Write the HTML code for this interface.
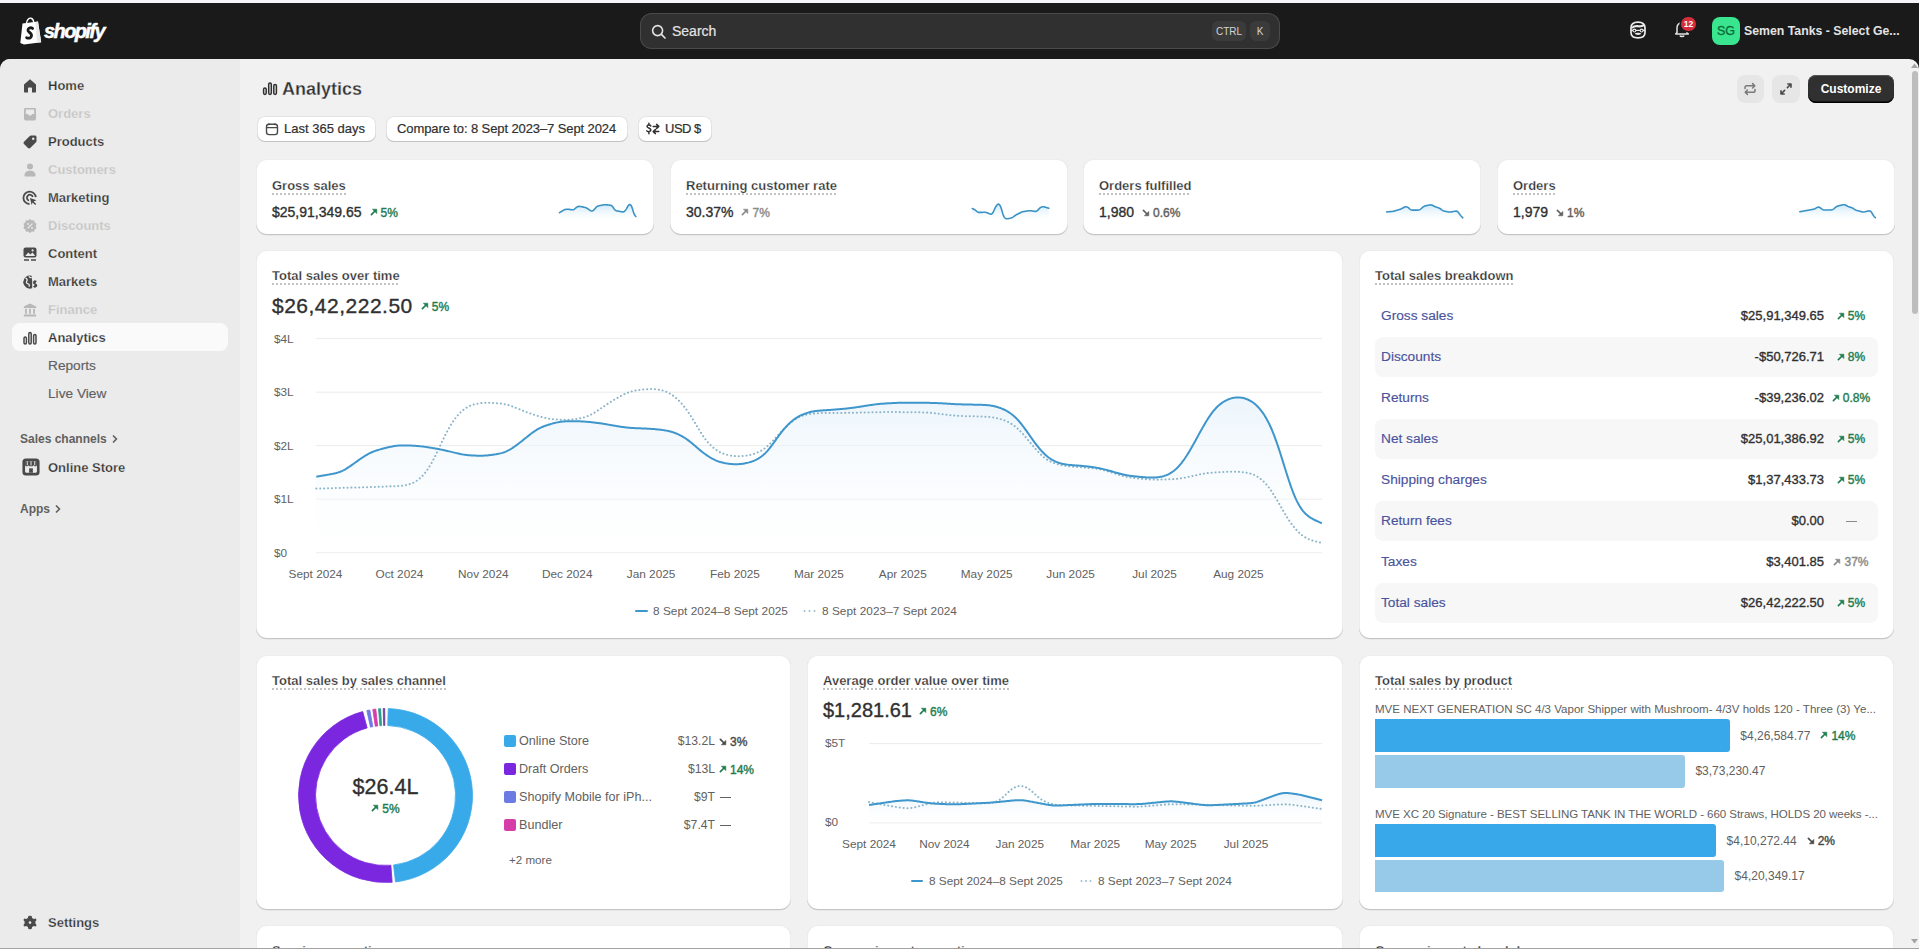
<!DOCTYPE html>
<html><head><meta charset="utf-8">
<style>
*{box-sizing:border-box;margin:0;padding:0}
html,body{width:1919px;height:949px;overflow:hidden;background:#1a1a1a;font-family:"Liberation Sans",sans-serif;color:#303030}
.abs{position:absolute}
#topstrip{left:0;top:0;width:1919px;height:3px;background:#f6f6f8}
#topbar{left:0;top:3px;width:1919px;height:56px;background:#1a1a1a}
#frame{left:0;top:59px;width:1919px;height:889px;background:#f1f1f1;border-radius:10px 10px 0 0;overflow:hidden}
#sidebar{left:0;top:0;width:240px;height:889px;background:#ebebeb}
#bottomline{left:0;top:948px;width:1919px;height:1px;background:#a3a3a3}
.nav{position:absolute;left:12px;width:216px;height:28px;border-radius:8px;display:flex;align-items:center}
.nav .ic{position:absolute;left:8px;top:5px;width:20px;height:20px}
.nav .tx{position:absolute;left:36px;top:1px;line-height:28px;font-size:13px;font-weight:700;color:#303030;white-space:nowrap;-webkit-text-stroke:0.25px #ebebeb}
.nav.dis .tx{color:#c4c4c4}
.nav.sub .tx{font-weight:400;color:#616161;font-size:13.7px;-webkit-text-stroke:0.15px #616161}
.nav.act{background:#fafafa}
.card{position:absolute;background:#fff;border-radius:11px;box-shadow:0 0.5px 0 rgba(0,0,0,.08),inset 0 -1px 0 rgba(0,0,0,.17),inset 0 0 0 1px rgba(0,0,0,.07)}
.t13{font-size:13px;font-weight:700;color:#303030;line-height:16px;white-space:nowrap;-webkit-text-stroke:0.25px #fff}
.dot{background-image:linear-gradient(to right,#c2c2c2 50%,transparent 50%);background-size:4px 2px;background-repeat:repeat-x;background-position:0 100%;padding-bottom:2px}
.green{color:#1f7d4f}
.med{font-weight:400;-webkit-text-stroke:0.35px currentColor}
.gray{color:#616161}
.gray2{color:#8a8a8a}
.pct{font-size:12px;font-weight:400;-webkit-text-stroke:0.4px currentColor;white-space:nowrap}
.btn{position:absolute;top:115.5px;height:26.5px;background:#fff;border-radius:8px;box-shadow:inset 0 -1px 0 #c4c4c4,inset 0 0 0 1px #e3e3e3;font-size:13px;line-height:26px;color:#303030;white-space:nowrap;-webkit-text-stroke:0.2px #303030}
.axis{font-size:11.8px;color:#616161;white-space:nowrap;line-height:14px}
</style></head><body>
<div id="topstrip" class="abs"></div>
<div id="topbar" class="abs">
  <!-- logo -->
  <svg class="abs" style="left:19px;top:14px" width="24" height="28" viewBox="0 0 24 28">
    <path d="M3.5 6.5 L19 4.6 L22.2 25.2 L5 27.6 L1.3 26 Z" fill="#fff"/>
    <path d="M16.5 4.9 L19 4.6 L22.2 25.2 L18 25.8 Z" fill="#e8e8e8"/>
    <path d="M7.5 6 C8 2.5 10 0.8 12 1.2 C13.6 1.5 14.5 3 14.7 5.2" fill="none" stroke="#fff" stroke-width="1.4"/>
    <path d="M13.6 11.4 C12.6 10.7 11.3 10.6 10.4 11 C8.7 11.7 8.5 13.8 9.9 14.9 C11.2 15.9 12.9 16.8 12.5 19.1 C12.1 21.2 9.7 21.7 7.6 20.7" fill="none" stroke="#1a1a1a" stroke-width="2.8" stroke-linecap="round"/>
  </svg>
  <div class="abs" style="left:44px;top:14px;font-size:20px;font-weight:700;font-style:italic;color:#fff;letter-spacing:-1.6px;line-height:28px;-webkit-text-stroke:0.5px #fff">shopify</div>
  <!-- search -->
  <div class="abs" style="left:640px;top:10px;width:640px;height:36px;background:#303030;border-radius:12px;box-shadow:inset 0 0 0 1px #4a4a4a"></div>
  <svg class="abs" style="left:651px;top:21px" width="16" height="16" viewBox="0 0 16 16"><circle cx="6.6" cy="6.6" r="5" fill="none" stroke="#e3e3e3" stroke-width="1.6"/><path d="M10.4 10.4 L14 14" stroke="#e3e3e3" stroke-width="1.7" stroke-linecap="round"/></svg>
  <div class="abs" style="left:672px;top:20px;font-size:14px;line-height:16px;color:#e3e3e3;-webkit-text-stroke:0.2px #e3e3e3">Search</div>
  <div class="abs" style="left:1212px;top:18px;width:34px;height:20px;border-radius:6px;background:#3b3b3b;font-size:10px;line-height:22px;color:#d4d4d4;text-align:center">CTRL</div>
  <div class="abs" style="left:1250px;top:18px;width:20px;height:20px;border-radius:6px;background:#3b3b3b;font-size:10px;line-height:22px;color:#d4d4d4;text-align:center">K</div>
  <!-- right icons -->
  <svg class="abs" style="left:1628px;top:17px" width="20" height="20" viewBox="0 0 20 20"><path d="M3 8 C3 3.6 5.8 2.2 10 2.2 C14.2 2.2 17 3.6 17 8 V12.4 C17 16 14.4 17.8 10 17.8 C5.6 17.8 3 16 3 12.4 Z" fill="none" stroke="#ececec" stroke-width="1.7"/><path d="M3.6 7.2 C5 5.6 7.5 4.6 10.6 5.2 C12.6 5.6 14.6 4.8 16 3.8 L16.2 6 C14.5 7.4 12 7.6 9.6 7.3 C7.4 7 5.4 7.6 3.8 8.8 Z" fill="#ececec"/><path d="M3 10.4 H17" stroke="#ececec" stroke-width="1.2"/><circle cx="6.4" cy="10.6" r="2" fill="#ececec"/><circle cx="13.6" cy="10.6" r="2" fill="#ececec"/><circle cx="6.4" cy="10.6" r="0.9" fill="#1a1a1a"/><circle cx="13.6" cy="10.6" r="0.9" fill="#1a1a1a"/><path d="M6.6 13.6 C8 12.6 12 12.6 13.4 13.6 C12.6 15.4 7.4 15.4 6.6 13.6 Z" fill="#ececec"/></svg>
  <svg class="abs" style="left:1672px;top:16px" width="20" height="20" viewBox="0 0 20 20"><path d="M5 13.5 L5 9 C5 5.8 7.2 4 10 4 C12.8 4 15 5.8 15 9 L15 13.5 L16.3 15 L3.7 15 Z" fill="none" stroke="#e3e3e3" stroke-width="1.5" stroke-linejoin="round"/><path d="M8 16.5 C8.3 17.8 11.7 17.8 12 16.5" fill="none" stroke="#e3e3e3" stroke-width="1.5"/></svg>
  <div class="abs" style="left:1681px;top:14px;width:15px;height:14px;border-radius:7px;background:#d62d3d;box-shadow:0 0 0 1.5px #1a1a1a;color:#fff;font-size:8.5px;font-weight:700;line-height:14px;text-align:center">12</div>
  <div class="abs" style="left:1712px;top:14px;width:28px;height:28px;border-radius:8px;background:#3ae590;color:#0b6b35;-webkit-text-stroke:0.3px #0b6b35;font-size:12.5px;line-height:28px;text-align:center">SG</div>
  <div class="abs" style="left:1744px;top:20px;font-size:12.3px;font-weight:700;line-height:16px;color:#e3e3e3;white-space:nowrap">Semen Tanks - Select Ge...</div>
</div>

<div id="frame" class="abs"><div id="sidebar" class="abs"></div></div>
<div class="nav " style="top:71px"><svg class="ic" viewBox="0 0 20 20"><path d="M10 3.2 L16 8.6 V15.6 C16 16.2 15.6 16.6 15 16.6 H12 V12.6 C12 12 11.6 11.6 11 11.6 H9 C8.4 11.6 8 12 8 12.6 V16.6 H5 C4.4 16.6 4 16.2 4 15.6 V8.6 Z" fill="#4a4a4a"/></svg><div class="tx">Home</div></div>
<div class="nav dis" style="top:99px"><svg class="ic" viewBox="0 0 20 20"><path d="M5.5 4 H14.5 C15.6 4 16 4.6 16 5.6 V14.6 C16 15.6 15.4 16.4 14.4 16.4 H5.6 C4.6 16.4 4 15.6 4 14.6 V5.6 C4 4.6 4.4 4 5.5 4 Z M5.8 5.6 V10 H7.8 L9 11.4 H11 L12.2 10 H14.2 V5.6 Z" fill="#b8b8b8" fill-rule="evenodd"/></svg><div class="tx">Orders</div></div>
<div class="nav " style="top:127px"><svg class="ic" viewBox="0 0 20 20"><path d="M11 3.5 H15 C15.8 3.5 16.5 4.2 16.5 5 V9 C16.5 9.5 16.3 9.9 16 10.2 L10.2 16 C9.6 16.6 8.6 16.6 8 16 L4 12 C3.4 11.4 3.4 10.4 4 9.8 L9.8 4 C10.1 3.7 10.5 3.5 11 3.5 Z" fill="#4a4a4a"/><circle cx="13.2" cy="6.8" r="1.2" fill="#ebebeb"/></svg><div class="tx">Products</div></div>
<div class="nav dis" style="top:155px"><svg class="ic" viewBox="0 0 20 20"><circle cx="10" cy="6.5" r="3" fill="#b8b8b8"/><path d="M4.5 15.5 C4.5 12.2 7 10.8 10 10.8 C13 10.8 15.5 12.2 15.5 15.5 C15.5 16.1 15.1 16.5 14.5 16.5 H5.5 C4.9 16.5 4.5 16.1 4.5 15.5 Z" fill="#b8b8b8"/></svg><div class="tx">Customers</div></div>
<div class="nav " style="top:183px"><svg class="ic" viewBox="0 0 20 20"><path d="M9.5 16 A6.2 6.2 0 1 1 15.8 9.2" fill="none" stroke="#4a4a4a" stroke-width="1.8"/><path d="M9 12.6 A3 3 0 1 1 12.8 9" fill="none" stroke="#4a4a4a" stroke-width="1.8"/><path d="M10 10 L16.5 12.2 L13.6 13.4 L16.2 16 L15.2 17 L12.6 14.4 L11.6 17 Z" fill="#4a4a4a"/></svg><div class="tx">Marketing</div></div>
<div class="nav dis" style="top:211px"><svg class="ic" viewBox="0 0 20 20"><path d="M10 3 L11.8 4.5 L14.1 4.3 L14.6 6.6 L16.6 7.8 L15.7 10 L16.6 12.2 L14.6 13.4 L14.1 15.7 L11.8 15.5 L10 17 L8.2 15.5 L5.9 15.7 L5.4 13.4 L3.4 12.2 L4.3 10 L3.4 7.8 L5.4 6.6 L5.9 4.3 L8.2 4.5 Z" fill="#b8b8b8"/><path d="M7.6 12.4 L12.4 7.6" stroke="#ebebeb" stroke-width="1.3"/><circle cx="8" cy="8" r="0.9" fill="#ebebeb"/><circle cx="12" cy="12" r="0.9" fill="#ebebeb"/></svg><div class="tx">Discounts</div></div>
<div class="nav " style="top:239px"><svg class="ic" viewBox="0 0 20 20"><rect x="3.5" y="3.5" width="13" height="10" rx="2" fill="#4a4a4a"/><path d="M5.2 12 L8.3 8.4 L10.4 10.4 L12.4 8.6 L14.8 11.2 V12 Z" fill="#ebebeb"/><circle cx="12.6" cy="6.4" r="1.1" fill="#ebebeb"/><path d="M4 16 H9 M11 16 H16" stroke="#4a4a4a" stroke-width="1.6"/></svg><div class="tx">Content</div></div>
<div class="nav " style="top:267px"><svg class="ic" viewBox="0 0 20 20"><path d="M11.6 3.7 A6.6 6.6 0 1 0 12.2 16.2 L12.2 9 Z" fill="#4a4a4a"/><path d="M5.5 6.2 C7 6.6 7.6 8 6.8 9 C6 10 6.6 11.8 8 11.8 C9 11.8 9.5 13 9.2 14.6" fill="none" stroke="#ebebeb" stroke-width="1.3"/><path d="M9 4.2 C9.5 5.5 10.8 5.8 11.6 5.4" fill="none" stroke="#ebebeb" stroke-width="1.2"/><path d="M16.4 9.6 C15.6 8.9 13.6 9 13.6 10.4 C13.6 12 16.6 11.6 16.6 13.4 C16.6 14.8 14.4 15 13.4 14.2 M15 8.2 V15.8" fill="none" stroke="#4a4a4a" stroke-width="1.4"/></svg><div class="tx">Markets</div></div>
<div class="nav dis" style="top:295px"><svg class="ic" viewBox="0 0 20 20"><path d="M10 3.5 L16.2 6.6 V8 H3.8 V6.6 Z" fill="#b8b8b8"/><rect x="5" y="8.8" width="1.8" height="5" fill="#b8b8b8"/><rect x="9.1" y="8.8" width="1.8" height="5" fill="#b8b8b8"/><rect x="13.2" y="8.8" width="1.8" height="5" fill="#b8b8b8"/><rect x="3.8" y="14.4" width="12.4" height="2" rx="0.6" fill="#b8b8b8"/></svg><div class="tx">Finance</div></div>
<div class="nav act" style="top:323px"><svg class="ic" viewBox="0 0 20 20"><rect x="4" y="9" width="2.4" height="7" rx="1.2" fill="none" stroke="#4a4a4a" stroke-width="1.5"/><rect x="8.8" y="4.5" width="2.4" height="11.5" rx="1.2" fill="none" stroke="#4a4a4a" stroke-width="1.5"/><rect x="13.6" y="6.5" width="2.4" height="9.5" rx="1.2" fill="none" stroke="#4a4a4a" stroke-width="1.5"/></svg><div class="tx">Analytics</div></div>
<div class="nav sub" style="top:351px"><svg class="ic" viewBox="0 0 20 20"></svg><div class="tx">Reports</div></div>
<div class="nav sub" style="top:379px"><svg class="ic" viewBox="0 0 20 20"></svg><div class="tx">Live View</div></div>
<div class="abs" style="left:20px;top:431px;font-size:12px;font-weight:700;color:#616161;line-height:16px;white-space:nowrap">Sales channels</div><svg class="abs" style="left:110px;top:433px" width="10" height="12" viewBox="0 0 10 12"><path d="M3.5 3 L6.5 6 L3.5 9" fill="none" stroke="#616161" stroke-width="1.7" stroke-linecap="round" stroke-linejoin="round"/></svg>
<div class="nav " style="top:453px"><svg class="ic" viewBox="0 0 20 20" style="left:8px;top:3px;width:22px;height:22px"><rect x="2.2" y="2.2" width="15.6" height="15.6" rx="3.2" fill="#4a4a4a"/><rect x="4.6" y="4.8" width="10.8" height="10.4" rx="1" fill="#ebebeb"/><path d="M4.6 4.8 H15.4 V8 C15.4 8.9 14.6 9.4 13.9 9.4 C13.1 9.4 12.5 8.9 12.4 8.2 C12.2 8.9 11.6 9.4 10.9 9.4 H9.1 C8.4 9.4 7.8 8.9 7.6 8.2 C7.5 8.9 6.9 9.4 6.1 9.4 C5.4 9.4 4.6 8.9 4.6 8 Z" fill="#4a4a4a"/><path d="M6.6 4.8 V8.4 M10 4.8 V8.6 M13.4 4.8 V8.4" stroke="#ebebeb" stroke-width="0.9"/><rect x="8.3" y="11.2" width="3.4" height="4" fill="#4a4a4a"/></svg><div class="tx">Online Store</div></div>
<div class="abs" style="left:20px;top:501px;font-size:12px;font-weight:700;color:#616161;line-height:16px;white-space:nowrap">Apps</div><svg class="abs" style="left:53px;top:503px" width="10" height="12" viewBox="0 0 10 12"><path d="M3.5 3 L6.5 6 L3.5 9" fill="none" stroke="#616161" stroke-width="1.7" stroke-linecap="round" stroke-linejoin="round"/></svg>
<div class="nav " style="top:908px"><svg class="ic" viewBox="0 0 20 20"><path d="M10 2.8 L11.6 3.1 L12.1 5 L13.8 6 L15.7 5.5 L16.6 6.9 L15.4 8.4 V10.6 L16.6 12.1 L15.7 13.5 L13.8 13 L12.1 14 L11.6 15.9 L10 16.2 L8.4 15.9 L7.9 14 L6.2 13 L4.3 13.5 L3.4 12.1 L4.6 10.6 V8.4 L3.4 6.9 L4.3 5.5 L6.2 6 L7.9 5 L8.4 3.1 Z" fill="#4a4a4a"/><circle cx="10" cy="9.6" r="1.3" fill="#ebebeb"/></svg><div class="tx">Settings</div></div>

<svg class="abs" style="left:261px;top:79px" width="18" height="18" viewBox="0 0 18 18"><rect x="2.6" y="9" width="2.6" height="6.4" rx="1.3" fill="none" stroke="#303030" stroke-width="1.5"/><rect x="7.7" y="4" width="2.6" height="11.4" rx="1.3" fill="none" stroke="#303030" stroke-width="1.5"/><rect x="12.8" y="5.5" width="2.6" height="9.9" rx="1.3" fill="none" stroke="#303030" stroke-width="1.5"/></svg>
<div class="abs" style="left:282px;top:77px;font-size:18px;font-weight:700;line-height:24px;color:#303030;white-space:nowrap;-webkit-text-stroke:0.3px #f1f1f1">Analytics</div>
<div class="btn" style="left:257px;width:119px"><svg class="abs" style="left:7px;top:5px" width="16" height="16" viewBox="0 0 16 16"><rect x="2.5" y="3.2" width="11" height="10.4" rx="2.6" fill="none" stroke="#4a4a4a" stroke-width="1.4"/><path d="M2.8 6.6 H13.2 M5 2.2 V3.6 M11 2.2 V3.6" stroke="#4a4a4a" stroke-width="1.4"/></svg><span class="abs" style="left:27px;top:0">Last 365 days</span></div>
<div class="btn" style="left:386px;width:242px"><span class="abs" style="left:11px;top:0;letter-spacing:-0.1px">Compare to: 8 Sept 2023–7 Sept 2024</span></div>
<div class="btn" style="left:638px;width:74px"><svg class="abs" style="left:7px;top:5px" width="16" height="16" viewBox="0 0 16 16"><path d="M5.8 4.9 C5.4 3.9 2.2 3.6 2 5.4 C1.9 7.2 5.9 6.8 5.9 9 C5.9 11 2.6 11 1.8 9.9 M3.9 2.2 V4 M3.9 11 V12.8" fill="none" stroke="#303030" stroke-width="1.5" stroke-linecap="round"/><path d="M8.2 5.4 H13.6 M11.6 3.4 L13.8 5.4 L11.6 7.4 M13.8 10.6 H8.4 M10.4 8.6 L8.2 10.6 L10.4 12.6" fill="none" stroke="#303030" stroke-width="1.5" stroke-linecap="round" stroke-linejoin="round"/></svg><span class="abs" style="left:27px;top:0;letter-spacing:-0.5px">USD $</span></div>
<div class="abs" style="left:1737px;top:75px;width:27px;height:28px;border-radius:8px;background:#e6e6e6"><svg class="abs" style="left:4px;top:5px" width="18" height="18" viewBox="0 0 18 18"><path d="M4 8.6 V7.6 C4 6.5 4.8 5.8 5.8 5.8 H13.6 M11.6 3.6 L13.8 5.8 L11.6 8" fill="none" stroke="#7a7a7a" stroke-width="1.5" stroke-linecap="round" stroke-linejoin="round"/><path d="M14 9.4 V10.4 C14 11.5 13.2 12.2 12.2 12.2 H4.4 M6.4 14.4 L4.2 12.2 L6.4 10" fill="none" stroke="#7a7a7a" stroke-width="1.5" stroke-linecap="round" stroke-linejoin="round"/></svg></div>
<div class="abs" style="left:1772px;top:75px;width:28px;height:28px;border-radius:8px;background:#e6e6e6"><svg class="abs" style="left:5px;top:5px" width="18" height="18" viewBox="0 0 18 18"><path d="M10.4 7.6 L14 4 M14 4 H10.8 M14 4 V7.2 M7.6 10.4 L4 14 M4 14 H7.2 M4 14 V10.8" fill="none" stroke="#4a4a4a" stroke-width="1.6" stroke-linecap="round" stroke-linejoin="round"/></svg></div>
<div class="abs" style="left:1808px;top:75px;width:86px;height:28px;border-radius:8px;background:#303030;box-shadow:inset 0 -1.5px 0 #000,inset 0 1px 0 #555;color:#fff;font-size:12px;font-weight:700;line-height:28px;text-align:center">Customize</div>

<div class="card" style="left:256px;top:159px;width:398px;height:76px"></div>
<div class="abs t13" style="left:272px;top:178px"><span class="dot">Gross sales</span></div>
<div class="abs" style="left:272px;top:203px;line-height:17px;white-space:nowrap"><span class="med" style="font-size:14px;color:#303030">$25,91,349.65</span><span class="pct green" style="margin-left:8px"><svg width="8" height="8" viewBox="0 0 8 8" style="display:inline-block;vertical-align:middle;margin-right:3px;position:relative;top:-1.5px"><path d="M1.4 6.6 L5 3" stroke="currentColor" stroke-width="1.7" stroke-linecap="round"/><path d="M2.4 1.2 H6.8 V5.6 Z" fill="currentColor" stroke="currentColor" stroke-width="0.6" stroke-linejoin="round"/></svg>5%</span></div>
<svg class="abs" style="left:0;top:0" width="1919" height="260" viewBox="0 0 1919 260"><defs><linearGradient id="sg0" x1="0" y1="0" x2="0" y2="1"><stop offset="0" stop-color="#bfe2f7" stop-opacity=".8"/><stop offset="1" stop-color="#ffffff" stop-opacity="0"/></linearGradient></defs><path d="M559.40 212.70 L559.90 212.40 L560.40 212.10 L560.90 211.81 L561.40 211.51 L561.90 211.21 L562.40 210.91 L562.90 210.61 L563.40 210.32 L563.90 210.05 L564.40 209.80 L564.90 209.60 L565.40 209.46 L565.90 209.37 L566.40 209.33 L566.90 209.31 L567.40 209.30 L567.90 209.31 L568.40 209.32 L568.90 209.34 L569.40 209.39 L569.90 209.45 L570.40 209.53 L570.90 209.62 L571.40 209.70 L571.90 209.78 L572.40 209.82 L572.90 209.79 L573.40 209.66 L573.90 209.42 L574.40 209.09 L574.90 208.69 L575.40 208.27 L575.90 207.84 L576.40 207.44 L576.90 207.09 L577.40 206.81 L577.90 206.61 L578.40 206.47 L578.90 206.40 L579.40 206.38 L579.90 206.42 L580.40 206.49 L580.90 206.58 L581.40 206.68 L581.90 206.79 L582.40 206.90 L582.90 207.01 L583.40 207.12 L583.90 207.23 L584.40 207.34 L584.90 207.46 L585.40 207.59 L585.90 207.75 L586.40 207.95 L586.90 208.20 L587.40 208.50 L587.90 208.83 L588.40 209.18 L588.90 209.53 L589.40 209.89 L589.90 210.22 L590.40 210.52 L590.90 210.75 L591.40 210.90 L591.90 210.94 L592.40 210.87 L592.90 210.68 L593.40 210.36 L593.90 209.92 L594.40 209.39 L594.90 208.79 L595.40 208.18 L595.90 207.59 L596.40 207.07 L596.90 206.63 L597.40 206.31 L597.90 206.08 L598.40 205.92 L598.90 205.80 L599.40 205.69 L599.90 205.58 L600.40 205.48 L600.90 205.38 L601.40 205.28 L601.90 205.17 L602.40 205.07 L602.90 204.97 L603.40 204.88 L603.90 204.80 L604.40 204.74 L604.90 204.72 L605.40 204.72 L605.90 204.75 L606.40 204.79 L606.90 204.84 L607.40 204.90 L607.90 204.95 L608.40 205.01 L608.90 205.06 L609.40 205.12 L609.90 205.18 L610.40 205.26 L610.90 205.38 L611.40 205.60 L611.90 205.94 L612.40 206.43 L612.90 207.06 L613.40 207.78 L613.90 208.52 L614.40 209.22 L614.90 209.81 L615.40 210.26 L615.90 210.57 L616.40 210.77 L616.90 210.90 L617.40 211.01 L617.90 211.10 L618.40 211.19 L618.90 211.28 L619.40 211.37 L619.90 211.46 L620.40 211.55 L620.90 211.64 L621.40 211.73 L621.90 211.81 L622.40 211.88 L622.90 211.91 L623.40 211.85 L623.90 211.68 L624.40 211.37 L624.90 210.91 L625.40 210.32 L625.90 209.62 L626.40 208.83 L626.90 207.98 L627.40 207.09 L627.90 206.22 L628.40 205.46 L628.90 204.88 L629.40 204.55 L629.90 204.49 L630.40 204.71 L630.90 205.20 L631.40 206.00 L631.90 207.15 L632.40 208.62 L632.90 210.29 L633.40 211.94 L633.90 213.39 L634.40 214.53 L634.90 215.37 L635.40 215.99 L635.90 216.51 L636.0 222 L559.4 222 Z" fill="url(#sg0)"/><path d="M559.40 212.70 L559.90 212.40 L560.40 212.10 L560.90 211.81 L561.40 211.51 L561.90 211.21 L562.40 210.91 L562.90 210.61 L563.40 210.32 L563.90 210.05 L564.40 209.80 L564.90 209.60 L565.40 209.46 L565.90 209.37 L566.40 209.33 L566.90 209.31 L567.40 209.30 L567.90 209.31 L568.40 209.32 L568.90 209.34 L569.40 209.39 L569.90 209.45 L570.40 209.53 L570.90 209.62 L571.40 209.70 L571.90 209.78 L572.40 209.82 L572.90 209.79 L573.40 209.66 L573.90 209.42 L574.40 209.09 L574.90 208.69 L575.40 208.27 L575.90 207.84 L576.40 207.44 L576.90 207.09 L577.40 206.81 L577.90 206.61 L578.40 206.47 L578.90 206.40 L579.40 206.38 L579.90 206.42 L580.40 206.49 L580.90 206.58 L581.40 206.68 L581.90 206.79 L582.40 206.90 L582.90 207.01 L583.40 207.12 L583.90 207.23 L584.40 207.34 L584.90 207.46 L585.40 207.59 L585.90 207.75 L586.40 207.95 L586.90 208.20 L587.40 208.50 L587.90 208.83 L588.40 209.18 L588.90 209.53 L589.40 209.89 L589.90 210.22 L590.40 210.52 L590.90 210.75 L591.40 210.90 L591.90 210.94 L592.40 210.87 L592.90 210.68 L593.40 210.36 L593.90 209.92 L594.40 209.39 L594.90 208.79 L595.40 208.18 L595.90 207.59 L596.40 207.07 L596.90 206.63 L597.40 206.31 L597.90 206.08 L598.40 205.92 L598.90 205.80 L599.40 205.69 L599.90 205.58 L600.40 205.48 L600.90 205.38 L601.40 205.28 L601.90 205.17 L602.40 205.07 L602.90 204.97 L603.40 204.88 L603.90 204.80 L604.40 204.74 L604.90 204.72 L605.40 204.72 L605.90 204.75 L606.40 204.79 L606.90 204.84 L607.40 204.90 L607.90 204.95 L608.40 205.01 L608.90 205.06 L609.40 205.12 L609.90 205.18 L610.40 205.26 L610.90 205.38 L611.40 205.60 L611.90 205.94 L612.40 206.43 L612.90 207.06 L613.40 207.78 L613.90 208.52 L614.40 209.22 L614.90 209.81 L615.40 210.26 L615.90 210.57 L616.40 210.77 L616.90 210.90 L617.40 211.01 L617.90 211.10 L618.40 211.19 L618.90 211.28 L619.40 211.37 L619.90 211.46 L620.40 211.55 L620.90 211.64 L621.40 211.73 L621.90 211.81 L622.40 211.88 L622.90 211.91 L623.40 211.85 L623.90 211.68 L624.40 211.37 L624.90 210.91 L625.40 210.32 L625.90 209.62 L626.40 208.83 L626.90 207.98 L627.40 207.09 L627.90 206.22 L628.40 205.46 L628.90 204.88 L629.40 204.55 L629.90 204.49 L630.40 204.71 L630.90 205.20 L631.40 206.00 L631.90 207.15 L632.40 208.62 L632.90 210.29 L633.40 211.94 L633.90 213.39 L634.40 214.53 L634.90 215.37 L635.40 215.99 L635.90 216.51" fill="none" stroke="#3b93c4" stroke-width="1.6" stroke-linejoin="round" stroke-linecap="round"/></svg>
<div class="card" style="left:670px;top:159px;width:398px;height:76px"></div>
<div class="abs t13" style="left:686px;top:178px"><span class="dot">Returning customer rate</span></div>
<div class="abs" style="left:686px;top:203px;line-height:17px;white-space:nowrap"><span class="med" style="font-size:14px;color:#303030">30.37%</span><span class="pct gray2" style="margin-left:8px"><svg width="8" height="8" viewBox="0 0 8 8" style="display:inline-block;vertical-align:middle;margin-right:3px;position:relative;top:-1.5px"><path d="M1.4 6.6 L5 3" stroke="currentColor" stroke-width="1.7" stroke-linecap="round"/><path d="M2.4 1.2 H6.8 V5.6 Z" fill="currentColor" stroke="currentColor" stroke-width="0.6" stroke-linejoin="round"/></svg>7%</span></div>
<svg class="abs" style="left:0;top:0" width="1919" height="260" viewBox="0 0 1919 260"><defs><linearGradient id="sg1" x1="0" y1="0" x2="0" y2="1"><stop offset="0" stop-color="#bfe2f7" stop-opacity=".8"/><stop offset="1" stop-color="#ffffff" stop-opacity="0"/></linearGradient></defs><path d="M972.30 208.50 L972.80 208.76 L973.30 209.02 L973.80 209.28 L974.30 209.56 L974.80 209.86 L975.30 210.19 L975.80 210.56 L976.30 210.95 L976.80 211.35 L977.30 211.72 L977.80 212.02 L978.30 212.23 L978.80 212.36 L979.30 212.41 L979.80 212.42 L980.30 212.41 L980.80 212.39 L981.30 212.37 L981.80 212.35 L982.30 212.33 L982.80 212.32 L983.30 212.30 L983.80 212.28 L984.30 212.27 L984.80 212.27 L985.30 212.31 L985.80 212.38 L986.30 212.49 L986.80 212.65 L987.30 212.83 L987.80 213.03 L988.30 213.23 L988.80 213.44 L989.30 213.64 L989.80 213.84 L990.30 214.02 L990.80 214.14 L991.30 214.15 L991.80 213.96 L992.30 213.51 L992.80 212.80 L993.30 211.89 L993.80 210.85 L994.30 209.75 L994.80 208.68 L995.30 207.66 L995.80 206.74 L996.30 205.93 L996.80 205.24 L997.30 204.68 L997.80 204.29 L998.30 204.13 L998.80 204.22 L999.30 204.58 L999.80 205.18 L1000.30 206.02 L1000.80 207.12 L1001.30 208.51 L1001.80 210.15 L1002.30 211.92 L1002.80 213.65 L1003.30 215.18 L1003.80 216.38 L1004.30 217.24 L1004.80 217.81 L1005.30 218.19 L1005.80 218.45 L1006.30 218.63 L1006.80 218.72 L1007.30 218.75 L1007.80 218.72 L1008.30 218.65 L1008.80 218.55 L1009.30 218.45 L1009.80 218.34 L1010.30 218.23 L1010.80 218.10 L1011.30 217.94 L1011.80 217.74 L1012.30 217.48 L1012.80 217.18 L1013.30 216.85 L1013.80 216.49 L1014.30 216.13 L1014.80 215.77 L1015.30 215.42 L1015.80 215.08 L1016.30 214.77 L1016.80 214.48 L1017.30 214.21 L1017.80 213.95 L1018.30 213.70 L1018.80 213.45 L1019.30 213.20 L1019.80 212.95 L1020.30 212.70 L1020.80 212.46 L1021.30 212.23 L1021.80 212.02 L1022.30 211.84 L1022.80 211.70 L1023.30 211.59 L1023.80 211.50 L1024.30 211.42 L1024.80 211.35 L1025.30 211.28 L1025.80 211.21 L1026.30 211.14 L1026.80 211.07 L1027.30 210.99 L1027.80 210.93 L1028.30 210.86 L1028.80 210.80 L1029.30 210.75 L1029.80 210.73 L1030.30 210.73 L1030.80 210.77 L1031.30 210.83 L1031.80 210.90 L1032.30 210.99 L1032.80 211.07 L1033.30 211.16 L1033.80 211.25 L1034.30 211.33 L1034.80 211.39 L1035.30 211.42 L1035.80 211.39 L1036.30 211.25 L1036.80 210.99 L1037.30 210.61 L1037.80 210.16 L1038.30 209.65 L1038.80 209.14 L1039.30 208.63 L1039.80 208.15 L1040.30 207.73 L1040.80 207.39 L1041.30 207.13 L1041.80 206.94 L1042.30 206.81 L1042.80 206.74 L1043.30 206.74 L1043.80 206.79 L1044.30 206.89 L1044.80 207.02 L1045.30 207.17 L1045.80 207.32 L1046.30 207.48 L1046.80 207.64 L1047.30 207.79 L1047.80 207.95 L1048.30 208.11 L1048.80 208.27 L1048.9 222 L972.3 222 Z" fill="url(#sg1)"/><path d="M972.30 208.50 L972.80 208.76 L973.30 209.02 L973.80 209.28 L974.30 209.56 L974.80 209.86 L975.30 210.19 L975.80 210.56 L976.30 210.95 L976.80 211.35 L977.30 211.72 L977.80 212.02 L978.30 212.23 L978.80 212.36 L979.30 212.41 L979.80 212.42 L980.30 212.41 L980.80 212.39 L981.30 212.37 L981.80 212.35 L982.30 212.33 L982.80 212.32 L983.30 212.30 L983.80 212.28 L984.30 212.27 L984.80 212.27 L985.30 212.31 L985.80 212.38 L986.30 212.49 L986.80 212.65 L987.30 212.83 L987.80 213.03 L988.30 213.23 L988.80 213.44 L989.30 213.64 L989.80 213.84 L990.30 214.02 L990.80 214.14 L991.30 214.15 L991.80 213.96 L992.30 213.51 L992.80 212.80 L993.30 211.89 L993.80 210.85 L994.30 209.75 L994.80 208.68 L995.30 207.66 L995.80 206.74 L996.30 205.93 L996.80 205.24 L997.30 204.68 L997.80 204.29 L998.30 204.13 L998.80 204.22 L999.30 204.58 L999.80 205.18 L1000.30 206.02 L1000.80 207.12 L1001.30 208.51 L1001.80 210.15 L1002.30 211.92 L1002.80 213.65 L1003.30 215.18 L1003.80 216.38 L1004.30 217.24 L1004.80 217.81 L1005.30 218.19 L1005.80 218.45 L1006.30 218.63 L1006.80 218.72 L1007.30 218.75 L1007.80 218.72 L1008.30 218.65 L1008.80 218.55 L1009.30 218.45 L1009.80 218.34 L1010.30 218.23 L1010.80 218.10 L1011.30 217.94 L1011.80 217.74 L1012.30 217.48 L1012.80 217.18 L1013.30 216.85 L1013.80 216.49 L1014.30 216.13 L1014.80 215.77 L1015.30 215.42 L1015.80 215.08 L1016.30 214.77 L1016.80 214.48 L1017.30 214.21 L1017.80 213.95 L1018.30 213.70 L1018.80 213.45 L1019.30 213.20 L1019.80 212.95 L1020.30 212.70 L1020.80 212.46 L1021.30 212.23 L1021.80 212.02 L1022.30 211.84 L1022.80 211.70 L1023.30 211.59 L1023.80 211.50 L1024.30 211.42 L1024.80 211.35 L1025.30 211.28 L1025.80 211.21 L1026.30 211.14 L1026.80 211.07 L1027.30 210.99 L1027.80 210.93 L1028.30 210.86 L1028.80 210.80 L1029.30 210.75 L1029.80 210.73 L1030.30 210.73 L1030.80 210.77 L1031.30 210.83 L1031.80 210.90 L1032.30 210.99 L1032.80 211.07 L1033.30 211.16 L1033.80 211.25 L1034.30 211.33 L1034.80 211.39 L1035.30 211.42 L1035.80 211.39 L1036.30 211.25 L1036.80 210.99 L1037.30 210.61 L1037.80 210.16 L1038.30 209.65 L1038.80 209.14 L1039.30 208.63 L1039.80 208.15 L1040.30 207.73 L1040.80 207.39 L1041.30 207.13 L1041.80 206.94 L1042.30 206.81 L1042.80 206.74 L1043.30 206.74 L1043.80 206.79 L1044.30 206.89 L1044.80 207.02 L1045.30 207.17 L1045.80 207.32 L1046.30 207.48 L1046.80 207.64 L1047.30 207.79 L1047.80 207.95 L1048.30 208.11 L1048.80 208.27" fill="none" stroke="#3b93c4" stroke-width="1.6" stroke-linejoin="round" stroke-linecap="round"/></svg>
<div class="card" style="left:1083px;top:159px;width:398px;height:76px"></div>
<div class="abs t13" style="left:1099px;top:178px"><span class="dot">Orders fulfilled</span></div>
<div class="abs" style="left:1099px;top:203px;line-height:17px;white-space:nowrap"><span class="med" style="font-size:14px;color:#303030">1,980</span><span class="pct gray" style="margin-left:8px"><svg width="8" height="8" viewBox="0 0 8 8" style="display:inline-block;vertical-align:middle;margin-right:3px;position:relative;top:-1px"><path d="M1.4 1.4 L5 5" stroke="currentColor" stroke-width="1.7" stroke-linecap="round"/><path d="M2.4 6.8 H6.8 V2.4 Z" fill="currentColor" stroke="currentColor" stroke-width="0.6" stroke-linejoin="round"/></svg>0.6%</span></div>
<svg class="abs" style="left:0;top:0" width="1919" height="260" viewBox="0 0 1919 260"><defs><linearGradient id="sg2" x1="0" y1="0" x2="0" y2="1"><stop offset="0" stop-color="#bfe2f7" stop-opacity=".8"/><stop offset="1" stop-color="#ffffff" stop-opacity="0"/></linearGradient></defs><path d="M1386.80 211.90 L1387.30 211.86 L1387.80 211.82 L1388.30 211.78 L1388.80 211.74 L1389.30 211.70 L1389.80 211.66 L1390.30 211.62 L1390.80 211.58 L1391.30 211.53 L1391.80 211.49 L1392.30 211.43 L1392.80 211.35 L1393.30 211.25 L1393.80 211.14 L1394.30 211.01 L1394.80 210.87 L1395.30 210.72 L1395.80 210.57 L1396.30 210.43 L1396.80 210.28 L1397.30 210.13 L1397.80 209.98 L1398.30 209.84 L1398.80 209.69 L1399.30 209.54 L1399.80 209.37 L1400.30 209.20 L1400.80 209.00 L1401.30 208.77 L1401.80 208.53 L1402.30 208.26 L1402.80 207.99 L1403.30 207.72 L1403.80 207.45 L1404.30 207.21 L1404.80 207.00 L1405.30 206.86 L1405.80 206.80 L1406.30 206.82 L1406.80 206.92 L1407.30 207.10 L1407.80 207.35 L1408.30 207.68 L1408.80 208.09 L1409.30 208.54 L1409.80 209.00 L1410.30 209.40 L1410.80 209.71 L1411.30 209.91 L1411.80 210.03 L1412.30 210.08 L1412.80 210.09 L1413.30 210.10 L1413.80 210.10 L1414.30 210.10 L1414.80 210.10 L1415.30 210.10 L1415.80 210.10 L1416.30 210.10 L1416.80 210.10 L1417.30 210.10 L1417.80 210.09 L1418.30 210.06 L1418.80 209.99 L1419.30 209.85 L1419.80 209.63 L1420.30 209.32 L1420.80 208.94 L1421.30 208.51 L1421.80 208.06 L1422.30 207.61 L1422.80 207.19 L1423.30 206.80 L1423.80 206.48 L1424.30 206.23 L1424.80 206.04 L1425.30 205.89 L1425.80 205.77 L1426.30 205.65 L1426.80 205.54 L1427.30 205.43 L1427.80 205.32 L1428.30 205.21 L1428.80 205.11 L1429.30 205.00 L1429.80 204.92 L1430.30 204.86 L1430.80 204.86 L1431.30 204.92 L1431.80 205.06 L1432.30 205.25 L1432.80 205.48 L1433.30 205.73 L1433.80 205.98 L1434.30 206.23 L1434.80 206.47 L1435.30 206.70 L1435.80 206.91 L1436.30 207.09 L1436.80 207.26 L1437.30 207.41 L1437.80 207.57 L1438.30 207.73 L1438.80 207.92 L1439.30 208.15 L1439.80 208.43 L1440.30 208.76 L1440.80 209.11 L1441.30 209.49 L1441.80 209.86 L1442.30 210.20 L1442.80 210.51 L1443.30 210.76 L1443.80 210.95 L1444.30 211.10 L1444.80 211.22 L1445.30 211.32 L1445.80 211.42 L1446.30 211.52 L1446.80 211.62 L1447.30 211.71 L1447.80 211.81 L1448.30 211.90 L1448.80 211.98 L1449.30 212.03 L1449.80 212.05 L1450.30 212.03 L1450.80 211.98 L1451.30 211.90 L1451.80 211.81 L1452.30 211.72 L1452.80 211.63 L1453.30 211.53 L1453.80 211.44 L1454.30 211.34 L1454.80 211.25 L1455.30 211.18 L1455.80 211.14 L1456.30 211.15 L1456.80 211.26 L1457.30 211.48 L1457.80 211.83 L1458.30 212.34 L1458.80 212.97 L1459.30 213.68 L1459.80 214.42 L1460.30 215.11 L1460.80 215.74 L1461.30 216.30 L1461.80 216.82 L1462.30 217.32 L1462.80 217.80 L1462.9 222 L1386.8 222 Z" fill="url(#sg2)"/><path d="M1386.80 211.90 L1387.30 211.86 L1387.80 211.82 L1388.30 211.78 L1388.80 211.74 L1389.30 211.70 L1389.80 211.66 L1390.30 211.62 L1390.80 211.58 L1391.30 211.53 L1391.80 211.49 L1392.30 211.43 L1392.80 211.35 L1393.30 211.25 L1393.80 211.14 L1394.30 211.01 L1394.80 210.87 L1395.30 210.72 L1395.80 210.57 L1396.30 210.43 L1396.80 210.28 L1397.30 210.13 L1397.80 209.98 L1398.30 209.84 L1398.80 209.69 L1399.30 209.54 L1399.80 209.37 L1400.30 209.20 L1400.80 209.00 L1401.30 208.77 L1401.80 208.53 L1402.30 208.26 L1402.80 207.99 L1403.30 207.72 L1403.80 207.45 L1404.30 207.21 L1404.80 207.00 L1405.30 206.86 L1405.80 206.80 L1406.30 206.82 L1406.80 206.92 L1407.30 207.10 L1407.80 207.35 L1408.30 207.68 L1408.80 208.09 L1409.30 208.54 L1409.80 209.00 L1410.30 209.40 L1410.80 209.71 L1411.30 209.91 L1411.80 210.03 L1412.30 210.08 L1412.80 210.09 L1413.30 210.10 L1413.80 210.10 L1414.30 210.10 L1414.80 210.10 L1415.30 210.10 L1415.80 210.10 L1416.30 210.10 L1416.80 210.10 L1417.30 210.10 L1417.80 210.09 L1418.30 210.06 L1418.80 209.99 L1419.30 209.85 L1419.80 209.63 L1420.30 209.32 L1420.80 208.94 L1421.30 208.51 L1421.80 208.06 L1422.30 207.61 L1422.80 207.19 L1423.30 206.80 L1423.80 206.48 L1424.30 206.23 L1424.80 206.04 L1425.30 205.89 L1425.80 205.77 L1426.30 205.65 L1426.80 205.54 L1427.30 205.43 L1427.80 205.32 L1428.30 205.21 L1428.80 205.11 L1429.30 205.00 L1429.80 204.92 L1430.30 204.86 L1430.80 204.86 L1431.30 204.92 L1431.80 205.06 L1432.30 205.25 L1432.80 205.48 L1433.30 205.73 L1433.80 205.98 L1434.30 206.23 L1434.80 206.47 L1435.30 206.70 L1435.80 206.91 L1436.30 207.09 L1436.80 207.26 L1437.30 207.41 L1437.80 207.57 L1438.30 207.73 L1438.80 207.92 L1439.30 208.15 L1439.80 208.43 L1440.30 208.76 L1440.80 209.11 L1441.30 209.49 L1441.80 209.86 L1442.30 210.20 L1442.80 210.51 L1443.30 210.76 L1443.80 210.95 L1444.30 211.10 L1444.80 211.22 L1445.30 211.32 L1445.80 211.42 L1446.30 211.52 L1446.80 211.62 L1447.30 211.71 L1447.80 211.81 L1448.30 211.90 L1448.80 211.98 L1449.30 212.03 L1449.80 212.05 L1450.30 212.03 L1450.80 211.98 L1451.30 211.90 L1451.80 211.81 L1452.30 211.72 L1452.80 211.63 L1453.30 211.53 L1453.80 211.44 L1454.30 211.34 L1454.80 211.25 L1455.30 211.18 L1455.80 211.14 L1456.30 211.15 L1456.80 211.26 L1457.30 211.48 L1457.80 211.83 L1458.30 212.34 L1458.80 212.97 L1459.30 213.68 L1459.80 214.42 L1460.30 215.11 L1460.80 215.74 L1461.30 216.30 L1461.80 216.82 L1462.30 217.32 L1462.80 217.80" fill="none" stroke="#3b93c4" stroke-width="1.6" stroke-linejoin="round" stroke-linecap="round"/></svg>
<div class="card" style="left:1497px;top:159px;width:398px;height:76px"></div>
<div class="abs t13" style="left:1513px;top:178px"><span class="dot">Orders</span></div>
<div class="abs" style="left:1513px;top:203px;line-height:17px;white-space:nowrap"><span class="med" style="font-size:14px;color:#303030">1,979</span><span class="pct gray" style="margin-left:8px"><svg width="8" height="8" viewBox="0 0 8 8" style="display:inline-block;vertical-align:middle;margin-right:3px;position:relative;top:-1px"><path d="M1.4 1.4 L5 5" stroke="currentColor" stroke-width="1.7" stroke-linecap="round"/><path d="M2.4 6.8 H6.8 V2.4 Z" fill="currentColor" stroke="currentColor" stroke-width="0.6" stroke-linejoin="round"/></svg>1%</span></div>
<svg class="abs" style="left:0;top:0" width="1919" height="260" viewBox="0 0 1919 260"><defs><linearGradient id="sg3" x1="0" y1="0" x2="0" y2="1"><stop offset="0" stop-color="#bfe2f7" stop-opacity=".8"/><stop offset="1" stop-color="#ffffff" stop-opacity="0"/></linearGradient></defs><path d="M1799.80 211.70 L1800.30 211.61 L1800.80 211.52 L1801.30 211.43 L1801.80 211.34 L1802.30 211.25 L1802.80 211.17 L1803.30 211.08 L1803.80 210.99 L1804.30 210.90 L1804.80 210.81 L1805.30 210.72 L1805.80 210.63 L1806.30 210.54 L1806.80 210.45 L1807.30 210.36 L1807.80 210.28 L1808.30 210.19 L1808.80 210.10 L1809.30 210.01 L1809.80 209.92 L1810.30 209.83 L1810.80 209.74 L1811.30 209.65 L1811.80 209.56 L1812.30 209.47 L1812.80 209.38 L1813.30 209.27 L1813.80 209.13 L1814.30 208.96 L1814.80 208.75 L1815.30 208.50 L1815.80 208.22 L1816.30 207.92 L1816.80 207.63 L1817.30 207.37 L1817.80 207.16 L1818.30 207.05 L1818.80 207.08 L1819.30 207.23 L1819.80 207.49 L1820.30 207.83 L1820.80 208.19 L1821.30 208.56 L1821.80 208.93 L1822.30 209.27 L1822.80 209.56 L1823.30 209.79 L1823.80 209.94 L1824.30 210.02 L1824.80 210.05 L1825.30 210.05 L1825.80 210.05 L1826.30 210.04 L1826.80 210.02 L1827.30 210.01 L1827.80 210.00 L1828.30 209.99 L1828.80 209.98 L1829.30 209.97 L1829.80 209.96 L1830.30 209.95 L1830.80 209.93 L1831.30 209.89 L1831.80 209.82 L1832.30 209.68 L1832.80 209.46 L1833.30 209.16 L1833.80 208.80 L1834.30 208.39 L1834.80 207.96 L1835.30 207.54 L1835.80 207.13 L1836.30 206.77 L1836.80 206.46 L1837.30 206.21 L1837.80 206.02 L1838.30 205.87 L1838.80 205.74 L1839.30 205.62 L1839.80 205.51 L1840.30 205.39 L1840.80 205.28 L1841.30 205.16 L1841.80 205.05 L1842.30 204.93 L1842.80 204.83 L1843.30 204.74 L1843.80 204.68 L1844.30 204.69 L1844.80 204.78 L1845.30 204.95 L1845.80 205.19 L1846.30 205.47 L1846.80 205.76 L1847.30 206.06 L1847.80 206.34 L1848.30 206.60 L1848.80 206.82 L1849.30 206.99 L1849.80 207.13 L1850.30 207.24 L1850.80 207.36 L1851.30 207.49 L1851.80 207.67 L1852.30 207.91 L1852.80 208.19 L1853.30 208.50 L1853.80 208.83 L1854.30 209.17 L1854.80 209.49 L1855.30 209.77 L1855.80 210.02 L1856.30 210.23 L1856.80 210.40 L1857.30 210.55 L1857.80 210.69 L1858.30 210.83 L1858.80 210.96 L1859.30 211.10 L1859.80 211.23 L1860.30 211.37 L1860.80 211.50 L1861.30 211.63 L1861.80 211.76 L1862.30 211.87 L1862.80 211.95 L1863.30 211.99 L1863.80 211.98 L1864.30 211.92 L1864.80 211.82 L1865.30 211.70 L1865.80 211.58 L1866.30 211.45 L1866.80 211.32 L1867.30 211.20 L1867.80 211.07 L1868.30 210.96 L1868.80 210.88 L1869.30 210.86 L1869.80 210.93 L1870.30 211.13 L1870.80 211.50 L1871.30 212.06 L1871.80 212.79 L1872.30 213.63 L1872.80 214.50 L1873.30 215.30 L1873.80 216.00 L1874.30 216.60 L1874.80 217.12 L1875.30 217.61 L1875.4 222 L1799.8 222 Z" fill="url(#sg3)"/><path d="M1799.80 211.70 L1800.30 211.61 L1800.80 211.52 L1801.30 211.43 L1801.80 211.34 L1802.30 211.25 L1802.80 211.17 L1803.30 211.08 L1803.80 210.99 L1804.30 210.90 L1804.80 210.81 L1805.30 210.72 L1805.80 210.63 L1806.30 210.54 L1806.80 210.45 L1807.30 210.36 L1807.80 210.28 L1808.30 210.19 L1808.80 210.10 L1809.30 210.01 L1809.80 209.92 L1810.30 209.83 L1810.80 209.74 L1811.30 209.65 L1811.80 209.56 L1812.30 209.47 L1812.80 209.38 L1813.30 209.27 L1813.80 209.13 L1814.30 208.96 L1814.80 208.75 L1815.30 208.50 L1815.80 208.22 L1816.30 207.92 L1816.80 207.63 L1817.30 207.37 L1817.80 207.16 L1818.30 207.05 L1818.80 207.08 L1819.30 207.23 L1819.80 207.49 L1820.30 207.83 L1820.80 208.19 L1821.30 208.56 L1821.80 208.93 L1822.30 209.27 L1822.80 209.56 L1823.30 209.79 L1823.80 209.94 L1824.30 210.02 L1824.80 210.05 L1825.30 210.05 L1825.80 210.05 L1826.30 210.04 L1826.80 210.02 L1827.30 210.01 L1827.80 210.00 L1828.30 209.99 L1828.80 209.98 L1829.30 209.97 L1829.80 209.96 L1830.30 209.95 L1830.80 209.93 L1831.30 209.89 L1831.80 209.82 L1832.30 209.68 L1832.80 209.46 L1833.30 209.16 L1833.80 208.80 L1834.30 208.39 L1834.80 207.96 L1835.30 207.54 L1835.80 207.13 L1836.30 206.77 L1836.80 206.46 L1837.30 206.21 L1837.80 206.02 L1838.30 205.87 L1838.80 205.74 L1839.30 205.62 L1839.80 205.51 L1840.30 205.39 L1840.80 205.28 L1841.30 205.16 L1841.80 205.05 L1842.30 204.93 L1842.80 204.83 L1843.30 204.74 L1843.80 204.68 L1844.30 204.69 L1844.80 204.78 L1845.30 204.95 L1845.80 205.19 L1846.30 205.47 L1846.80 205.76 L1847.30 206.06 L1847.80 206.34 L1848.30 206.60 L1848.80 206.82 L1849.30 206.99 L1849.80 207.13 L1850.30 207.24 L1850.80 207.36 L1851.30 207.49 L1851.80 207.67 L1852.30 207.91 L1852.80 208.19 L1853.30 208.50 L1853.80 208.83 L1854.30 209.17 L1854.80 209.49 L1855.30 209.77 L1855.80 210.02 L1856.30 210.23 L1856.80 210.40 L1857.30 210.55 L1857.80 210.69 L1858.30 210.83 L1858.80 210.96 L1859.30 211.10 L1859.80 211.23 L1860.30 211.37 L1860.80 211.50 L1861.30 211.63 L1861.80 211.76 L1862.30 211.87 L1862.80 211.95 L1863.30 211.99 L1863.80 211.98 L1864.30 211.92 L1864.80 211.82 L1865.30 211.70 L1865.80 211.58 L1866.30 211.45 L1866.80 211.32 L1867.30 211.20 L1867.80 211.07 L1868.30 210.96 L1868.80 210.88 L1869.30 210.86 L1869.80 210.93 L1870.30 211.13 L1870.80 211.50 L1871.30 212.06 L1871.80 212.79 L1872.30 213.63 L1872.80 214.50 L1873.30 215.30 L1873.80 216.00 L1874.30 216.60 L1874.80 217.12 L1875.30 217.61" fill="none" stroke="#3b93c4" stroke-width="1.6" stroke-linejoin="round" stroke-linecap="round"/></svg>

<div class="card" style="left:256px;top:249.5px;width:1087px;height:389.5px"></div>
<div class="abs t13" style="left:272px;top:268px"><span class="dot">Total sales over time</span></div>
<div class="abs" style="left:272px;top:294px;line-height:24px;white-space:nowrap"><span class="med" style="font-size:21px;color:#303030;letter-spacing:0.5px">$26,42,222.50</span><span class="pct green" style="margin-left:8px;position:relative;top:-2px"><svg width="8" height="8" viewBox="0 0 8 8" style="display:inline-block;vertical-align:middle;margin-right:3px;position:relative;top:-1.5px"><path d="M1.4 6.6 L5 3" stroke="currentColor" stroke-width="1.7" stroke-linecap="round"/><path d="M2.4 1.2 H6.8 V5.6 Z" fill="currentColor" stroke="currentColor" stroke-width="0.6" stroke-linejoin="round"/></svg>5%</span></div>
<div class="abs axis" style="left:274px;top:331.6px">$4L</div>
<div class="abs axis" style="left:274px;top:385.2px">$3L</div>
<div class="abs axis" style="left:274px;top:438.6px">$2L</div>
<div class="abs axis" style="left:274px;top:492.2px">$1L</div>
<div class="abs axis" style="left:274px;top:545.7px">$0</div>
<div class="abs axis" style="left:265.5px;width:100px;text-align:center;top:567px">Sept 2024</div>
<div class="abs axis" style="left:349.4px;width:100px;text-align:center;top:567px">Oct 2024</div>
<div class="abs axis" style="left:433.3px;width:100px;text-align:center;top:567px">Nov 2024</div>
<div class="abs axis" style="left:517.2px;width:100px;text-align:center;top:567px">Dec 2024</div>
<div class="abs axis" style="left:601.1px;width:100px;text-align:center;top:567px">Jan 2025</div>
<div class="abs axis" style="left:685.0px;width:100px;text-align:center;top:567px">Feb 2025</div>
<div class="abs axis" style="left:768.9px;width:100px;text-align:center;top:567px">Mar 2025</div>
<div class="abs axis" style="left:852.8px;width:100px;text-align:center;top:567px">Apr 2025</div>
<div class="abs axis" style="left:936.7px;width:100px;text-align:center;top:567px">May 2025</div>
<div class="abs axis" style="left:1020.6px;width:100px;text-align:center;top:567px">Jun 2025</div>
<div class="abs axis" style="left:1104.5px;width:100px;text-align:center;top:567px">Jul 2025</div>
<div class="abs axis" style="left:1188.4px;width:100px;text-align:center;top:567px">Aug 2025</div>
<svg class="abs" style="left:0;top:0" width="1919" height="949" viewBox="0 0 1919 949"><defs><linearGradient id="bg1" x1="0" y1="0" x2="0" y2="1"><stop offset="0" stop-color="#e6f2fb" stop-opacity=".75"/><stop offset="1" stop-color="#ffffff" stop-opacity="0.2"/></linearGradient></defs><rect x="316" y="338.1" width="1006" height="1" fill="#ebebeb"/><rect x="316" y="391.7" width="1006" height="1" fill="#ebebeb"/><rect x="316" y="445.1" width="1006" height="1" fill="#ebebeb"/><rect x="316" y="498.7" width="1006" height="1" fill="#ebebeb"/><rect x="316" y="552.2" width="1006" height="1" fill="#ebebeb"/><path d="M316.30 476.70 L317.30 476.53 L318.30 476.36 L319.30 476.18 L320.30 476.01 L321.30 475.84 L322.30 475.67 L323.30 475.49 L324.30 475.32 L325.30 475.15 L326.30 474.97 L327.30 474.80 L328.30 474.62 L329.30 474.45 L330.30 474.26 L331.30 474.08 L332.30 473.88 L333.30 473.68 L334.30 473.46 L335.30 473.23 L336.30 472.98 L337.30 472.70 L338.30 472.40 L339.30 472.07 L340.30 471.70 L341.30 471.30 L342.30 470.86 L343.30 470.38 L344.30 469.86 L345.30 469.31 L346.30 468.72 L347.30 468.10 L348.30 467.45 L349.30 466.79 L350.30 466.10 L351.30 465.40 L352.30 464.69 L353.30 463.98 L354.30 463.26 L355.30 462.54 L356.30 461.82 L357.30 461.10 L358.30 460.39 L359.30 459.69 L360.30 458.99 L361.30 458.30 L362.30 457.63 L363.30 456.97 L364.30 456.32 L365.30 455.70 L366.30 455.10 L367.30 454.52 L368.30 453.96 L369.30 453.44 L370.30 452.94 L371.30 452.48 L372.30 452.04 L373.30 451.63 L374.30 451.25 L375.30 450.89 L376.30 450.55 L377.30 450.23 L378.30 449.93 L379.30 449.64 L380.30 449.36 L381.30 449.08 L382.30 448.82 L383.30 448.56 L384.30 448.30 L385.30 448.05 L386.30 447.80 L387.30 447.55 L388.30 447.32 L389.30 447.09 L390.30 446.86 L391.30 446.65 L392.30 446.45 L393.30 446.26 L394.30 446.09 L395.30 445.94 L396.30 445.80 L397.30 445.69 L398.30 445.59 L399.30 445.52 L400.30 445.46 L401.30 445.42 L402.30 445.39 L403.30 445.38 L404.30 445.38 L405.30 445.39 L406.30 445.41 L407.30 445.44 L408.30 445.47 L409.30 445.51 L410.30 445.55 L411.30 445.59 L412.30 445.64 L413.30 445.70 L414.30 445.76 L415.30 445.82 L416.30 445.89 L417.30 445.97 L418.30 446.06 L419.30 446.15 L420.30 446.26 L421.30 446.37 L422.30 446.49 L423.30 446.61 L424.30 446.75 L425.30 446.88 L426.30 447.03 L427.30 447.18 L428.30 447.33 L429.30 447.49 L430.30 447.65 L431.30 447.81 L432.30 447.98 L433.30 448.14 L434.30 448.31 L435.30 448.49 L436.30 448.66 L437.30 448.84 L438.30 449.02 L439.30 449.21 L440.30 449.41 L441.30 449.61 L442.30 449.81 L443.30 450.02 L444.30 450.24 L445.30 450.46 L446.30 450.69 L447.30 450.93 L448.30 451.16 L449.30 451.40 L450.30 451.65 L451.30 451.89 L452.30 452.14 L453.30 452.38 L454.30 452.62 L455.30 452.87 L456.30 453.10 L457.30 453.34 L458.30 453.56 L459.30 453.78 L460.30 453.99 L461.30 454.19 L462.30 454.37 L463.30 454.55 L464.30 454.70 L465.30 454.85 L466.30 454.98 L467.30 455.09 L468.30 455.19 L469.30 455.28 L470.30 455.36 L471.30 455.42 L472.30 455.48 L473.30 455.53 L474.30 455.58 L475.30 455.61 L476.30 455.64 L477.30 455.67 L478.30 455.69 L479.30 455.70 L480.30 455.70 L481.30 455.70 L482.30 455.68 L483.30 455.66 L484.30 455.62 L485.30 455.56 L486.30 455.50 L487.30 455.42 L488.30 455.33 L489.30 455.23 L490.30 455.11 L491.30 454.99 L492.30 454.85 L493.30 454.70 L494.30 454.55 L495.30 454.38 L496.30 454.21 L497.30 454.03 L498.30 453.83 L499.30 453.61 L500.30 453.38 L501.30 453.13 L502.30 452.85 L503.30 452.54 L504.30 452.20 L505.30 451.82 L506.30 451.41 L507.30 450.95 L508.30 450.46 L509.30 449.93 L510.30 449.36 L511.30 448.75 L512.30 448.12 L513.30 447.45 L514.30 446.76 L515.30 446.05 L516.30 445.32 L517.30 444.58 L518.30 443.82 L519.30 443.05 L520.30 442.27 L521.30 441.48 L522.30 440.69 L523.30 439.89 L524.30 439.09 L525.30 438.29 L526.30 437.49 L527.30 436.68 L528.30 435.89 L529.30 435.10 L530.30 434.32 L531.30 433.55 L532.30 432.81 L533.30 432.08 L534.30 431.38 L535.30 430.71 L536.30 430.07 L537.30 429.47 L538.30 428.89 L539.30 428.36 L540.30 427.86 L541.30 427.39 L542.30 426.95 L543.30 426.54 L544.30 426.16 L545.30 425.79 L546.30 425.45 L547.30 425.11 L548.30 424.79 L549.30 424.48 L550.30 424.19 L551.30 423.89 L552.30 423.61 L553.30 423.34 L554.30 423.08 L555.30 422.83 L556.30 422.60 L557.30 422.38 L558.30 422.18 L559.30 422.00 L560.30 421.84 L561.30 421.69 L562.30 421.57 L563.30 421.47 L564.30 421.38 L565.30 421.31 L566.30 421.26 L567.30 421.21 L568.30 421.18 L569.30 421.16 L570.30 421.15 L571.30 421.14 L572.30 421.14 L573.30 421.14 L574.30 421.15 L575.30 421.17 L576.30 421.19 L577.30 421.22 L578.30 421.25 L579.30 421.29 L580.30 421.34 L581.30 421.39 L582.30 421.45 L583.30 421.51 L584.30 421.58 L585.30 421.66 L586.30 421.74 L587.30 421.82 L588.30 421.91 L589.30 422.00 L590.30 422.10 L591.30 422.20 L592.30 422.30 L593.30 422.41 L594.30 422.52 L595.30 422.64 L596.30 422.76 L597.30 422.89 L598.30 423.03 L599.30 423.16 L600.30 423.31 L601.30 423.46 L602.30 423.61 L603.30 423.77 L604.30 423.94 L605.30 424.10 L606.30 424.27 L607.30 424.44 L608.30 424.62 L609.30 424.79 L610.30 424.97 L611.30 425.14 L612.30 425.32 L613.30 425.49 L614.30 425.67 L615.30 425.84 L616.30 426.01 L617.30 426.18 L618.30 426.35 L619.30 426.51 L620.30 426.67 L621.30 426.82 L622.30 426.97 L623.30 427.11 L624.30 427.24 L625.30 427.36 L626.30 427.47 L627.30 427.58 L628.30 427.67 L629.30 427.76 L630.30 427.83 L631.30 427.90 L632.30 427.97 L633.30 428.03 L634.30 428.08 L635.30 428.13 L636.30 428.18 L637.30 428.22 L638.30 428.26 L639.30 428.31 L640.30 428.35 L641.30 428.39 L642.30 428.43 L643.30 428.47 L644.30 428.51 L645.30 428.56 L646.30 428.60 L647.30 428.65 L648.30 428.70 L649.30 428.76 L650.30 428.82 L651.30 428.88 L652.30 428.95 L653.30 429.03 L654.30 429.11 L655.30 429.20 L656.30 429.29 L657.30 429.39 L658.30 429.50 L659.30 429.61 L660.30 429.73 L661.30 429.86 L662.30 429.99 L663.30 430.13 L664.30 430.28 L665.30 430.45 L666.30 430.62 L667.30 430.81 L668.30 431.01 L669.30 431.24 L670.30 431.48 L671.30 431.75 L672.30 432.05 L673.30 432.37 L674.30 432.71 L675.30 433.09 L676.30 433.49 L677.30 433.91 L678.30 434.36 L679.30 434.84 L680.30 435.35 L681.30 435.88 L682.30 436.44 L683.30 437.02 L684.30 437.64 L685.30 438.28 L686.30 438.95 L687.30 439.66 L688.30 440.39 L689.30 441.15 L690.30 441.93 L691.30 442.74 L692.30 443.57 L693.30 444.41 L694.30 445.26 L695.30 446.11 L696.30 446.97 L697.30 447.83 L698.30 448.68 L699.30 449.53 L700.30 450.36 L701.30 451.17 L702.30 451.96 L703.30 452.74 L704.30 453.49 L705.30 454.22 L706.30 454.92 L707.30 455.60 L708.30 456.26 L709.30 456.89 L710.30 457.50 L711.30 458.08 L712.30 458.64 L713.30 459.17 L714.30 459.66 L715.30 460.13 L716.30 460.57 L717.30 460.98 L718.30 461.36 L719.30 461.70 L720.30 462.02 L721.30 462.30 L722.30 462.56 L723.30 462.80 L724.30 463.02 L725.30 463.21 L726.30 463.39 L727.30 463.55 L728.30 463.70 L729.30 463.83 L730.30 463.94 L731.30 464.04 L732.30 464.12 L733.30 464.18 L734.30 464.22 L735.30 464.24 L736.30 464.24 L737.30 464.22 L738.30 464.17 L739.30 464.10 L740.30 464.01 L741.30 463.91 L742.30 463.78 L743.30 463.64 L744.30 463.47 L745.30 463.29 L746.30 463.09 L747.30 462.87 L748.30 462.63 L749.30 462.36 L750.30 462.07 L751.30 461.75 L752.30 461.39 L753.30 461.01 L754.30 460.59 L755.30 460.13 L756.30 459.64 L757.30 459.11 L758.30 458.55 L759.30 457.93 L760.30 457.28 L761.30 456.57 L762.30 455.81 L763.30 454.99 L764.30 454.11 L765.30 453.16 L766.30 452.15 L767.30 451.07 L768.30 449.92 L769.30 448.72 L770.30 447.45 L771.30 446.14 L772.30 444.78 L773.30 443.39 L774.30 441.99 L775.30 440.57 L776.30 439.15 L777.30 437.74 L778.30 436.35 L779.30 434.98 L780.30 433.65 L781.30 432.35 L782.30 431.09 L783.30 429.88 L784.30 428.70 L785.30 427.57 L786.30 426.48 L787.30 425.43 L788.30 424.42 L789.30 423.45 L790.30 422.53 L791.30 421.65 L792.30 420.81 L793.30 420.01 L794.30 419.26 L795.30 418.56 L796.30 417.90 L797.30 417.28 L798.30 416.71 L799.30 416.17 L800.30 415.67 L801.30 415.20 L802.30 414.76 L803.30 414.34 L804.30 413.95 L805.30 413.58 L806.30 413.24 L807.30 412.91 L808.30 412.60 L809.30 412.32 L810.30 412.06 L811.30 411.82 L812.30 411.60 L813.30 411.41 L814.30 411.24 L815.30 411.08 L816.30 410.95 L817.30 410.83 L818.30 410.72 L819.30 410.63 L820.30 410.55 L821.30 410.47 L822.30 410.41 L823.30 410.34 L824.30 410.28 L825.30 410.22 L826.30 410.15 L827.30 410.09 L828.30 410.03 L829.30 409.96 L830.30 409.90 L831.30 409.83 L832.30 409.75 L833.30 409.68 L834.30 409.60 L835.30 409.53 L836.30 409.45 L837.30 409.37 L838.30 409.28 L839.30 409.20 L840.30 409.11 L841.30 409.02 L842.30 408.94 L843.30 408.84 L844.30 408.75 L845.30 408.65 L846.30 408.55 L847.30 408.45 L848.30 408.34 L849.30 408.23 L850.30 408.11 L851.30 407.98 L852.30 407.85 L853.30 407.72 L854.30 407.58 L855.30 407.44 L856.30 407.29 L857.30 407.13 L858.30 406.98 L859.30 406.82 L860.30 406.66 L861.30 406.50 L862.30 406.34 L863.30 406.17 L864.30 406.01 L865.30 405.85 L866.30 405.69 L867.30 405.53 L868.30 405.37 L869.30 405.21 L870.30 405.06 L871.30 404.92 L872.30 404.77 L873.30 404.64 L874.30 404.51 L875.30 404.38 L876.30 404.27 L877.30 404.16 L878.30 404.06 L879.30 403.96 L880.30 403.87 L881.30 403.79 L882.30 403.71 L883.30 403.64 L884.30 403.57 L885.30 403.50 L886.30 403.44 L887.30 403.37 L888.30 403.31 L889.30 403.25 L890.30 403.20 L891.30 403.14 L892.30 403.09 L893.30 403.04 L894.30 402.99 L895.30 402.94 L896.30 402.90 L897.30 402.86 L898.30 402.82 L899.30 402.79 L900.30 402.76 L901.30 402.74 L902.30 402.72 L903.30 402.71 L904.30 402.69 L905.30 402.69 L906.30 402.68 L907.30 402.68 L908.30 402.68 L909.30 402.69 L910.30 402.69 L911.30 402.70 L912.30 402.70 L913.30 402.71 L914.30 402.72 L915.30 402.73 L916.30 402.74 L917.30 402.74 L918.30 402.75 L919.30 402.76 L920.30 402.77 L921.30 402.78 L922.30 402.79 L923.30 402.80 L924.30 402.81 L925.30 402.82 L926.30 402.83 L927.30 402.84 L928.30 402.86 L929.30 402.87 L930.30 402.89 L931.30 402.91 L932.30 402.94 L933.30 402.96 L934.30 403.00 L935.30 403.03 L936.30 403.07 L937.30 403.11 L938.30 403.16 L939.30 403.21 L940.30 403.26 L941.30 403.31 L942.30 403.37 L943.30 403.43 L944.30 403.49 L945.30 403.55 L946.30 403.62 L947.30 403.68 L948.30 403.74 L949.30 403.80 L950.30 403.86 L951.30 403.92 L952.30 403.98 L953.30 404.03 L954.30 404.08 L955.30 404.13 L956.30 404.18 L957.30 404.22 L958.30 404.26 L959.30 404.29 L960.30 404.33 L961.30 404.36 L962.30 404.39 L963.30 404.42 L964.30 404.44 L965.30 404.46 L966.30 404.49 L967.30 404.51 L968.30 404.53 L969.30 404.55 L970.30 404.57 L971.30 404.59 L972.30 404.61 L973.30 404.63 L974.30 404.65 L975.30 404.67 L976.30 404.69 L977.30 404.71 L978.30 404.74 L979.30 404.76 L980.30 404.79 L981.30 404.82 L982.30 404.85 L983.30 404.89 L984.30 404.94 L985.30 405.00 L986.30 405.06 L987.30 405.15 L988.30 405.24 L989.30 405.36 L990.30 405.49 L991.30 405.65 L992.30 405.82 L993.30 406.02 L994.30 406.24 L995.30 406.49 L996.30 406.75 L997.30 407.04 L998.30 407.35 L999.30 407.68 L1000.30 408.04 L1001.30 408.42 L1002.30 408.82 L1003.30 409.26 L1004.30 409.72 L1005.30 410.21 L1006.30 410.74 L1007.30 411.30 L1008.30 411.90 L1009.30 412.54 L1010.30 413.22 L1011.30 413.95 L1012.30 414.72 L1013.30 415.54 L1014.30 416.41 L1015.30 417.34 L1016.30 418.32 L1017.30 419.35 L1018.30 420.43 L1019.30 421.57 L1020.30 422.76 L1021.30 423.99 L1022.30 425.27 L1023.30 426.58 L1024.30 427.93 L1025.30 429.30 L1026.30 430.69 L1027.30 432.10 L1028.30 433.52 L1029.30 434.94 L1030.30 436.37 L1031.30 437.79 L1032.30 439.20 L1033.30 440.60 L1034.30 441.98 L1035.30 443.33 L1036.30 444.65 L1037.30 445.93 L1038.30 447.18 L1039.30 448.39 L1040.30 449.56 L1041.30 450.69 L1042.30 451.76 L1043.30 452.79 L1044.30 453.78 L1045.30 454.71 L1046.30 455.60 L1047.30 456.44 L1048.30 457.22 L1049.30 457.96 L1050.30 458.65 L1051.30 459.29 L1052.30 459.88 L1053.30 460.43 L1054.30 460.94 L1055.30 461.41 L1056.30 461.84 L1057.30 462.23 L1058.30 462.59 L1059.30 462.93 L1060.30 463.23 L1061.30 463.50 L1062.30 463.75 L1063.30 463.97 L1064.30 464.17 L1065.30 464.34 L1066.30 464.50 L1067.30 464.63 L1068.30 464.76 L1069.30 464.87 L1070.30 464.96 L1071.30 465.06 L1072.30 465.14 L1073.30 465.22 L1074.30 465.30 L1075.30 465.38 L1076.30 465.45 L1077.30 465.53 L1078.30 465.61 L1079.30 465.69 L1080.30 465.77 L1081.30 465.86 L1082.30 465.95 L1083.30 466.04 L1084.30 466.14 L1085.30 466.24 L1086.30 466.35 L1087.30 466.46 L1088.30 466.58 L1089.30 466.70 L1090.30 466.82 L1091.30 466.95 L1092.30 467.09 L1093.30 467.23 L1094.30 467.38 L1095.30 467.53 L1096.30 467.70 L1097.30 467.87 L1098.30 468.05 L1099.30 468.25 L1100.30 468.45 L1101.30 468.67 L1102.30 468.90 L1103.30 469.14 L1104.30 469.38 L1105.30 469.64 L1106.30 469.90 L1107.30 470.17 L1108.30 470.45 L1109.30 470.73 L1110.30 471.01 L1111.30 471.29 L1112.30 471.58 L1113.30 471.86 L1114.30 472.15 L1115.30 472.43 L1116.30 472.71 L1117.30 472.99 L1118.30 473.26 L1119.30 473.53 L1120.30 473.79 L1121.30 474.04 L1122.30 474.28 L1123.30 474.52 L1124.30 474.73 L1125.30 474.94 L1126.30 475.13 L1127.30 475.32 L1128.30 475.48 L1129.30 475.64 L1130.30 475.79 L1131.30 475.92 L1132.30 476.05 L1133.30 476.17 L1134.30 476.28 L1135.30 476.39 L1136.30 476.50 L1137.30 476.60 L1138.30 476.70 L1139.30 476.80 L1140.30 476.89 L1141.30 476.98 L1142.30 477.07 L1143.30 477.16 L1144.30 477.24 L1145.30 477.32 L1146.30 477.39 L1147.30 477.45 L1148.30 477.50 L1149.30 477.54 L1150.30 477.56 L1151.30 477.58 L1152.30 477.57 L1153.30 477.55 L1154.30 477.51 L1155.30 477.46 L1156.30 477.38 L1157.30 477.28 L1158.30 477.17 L1159.30 477.03 L1160.30 476.86 L1161.30 476.67 L1162.30 476.44 L1163.30 476.18 L1164.30 475.89 L1165.30 475.56 L1166.30 475.18 L1167.30 474.76 L1168.30 474.30 L1169.30 473.78 L1170.30 473.22 L1171.30 472.60 L1172.30 471.94 L1173.30 471.21 L1174.30 470.44 L1175.30 469.60 L1176.30 468.71 L1177.30 467.75 L1178.30 466.73 L1179.30 465.64 L1180.30 464.49 L1181.30 463.27 L1182.30 461.99 L1183.30 460.65 L1184.30 459.25 L1185.30 457.79 L1186.30 456.28 L1187.30 454.73 L1188.30 453.13 L1189.30 451.48 L1190.30 449.80 L1191.30 448.08 L1192.30 446.33 L1193.30 444.54 L1194.30 442.74 L1195.30 440.92 L1196.30 439.08 L1197.30 437.23 L1198.30 435.39 L1199.30 433.55 L1200.30 431.72 L1201.30 429.92 L1202.30 428.13 L1203.30 426.38 L1204.30 424.66 L1205.30 422.97 L1206.30 421.32 L1207.30 419.72 L1208.30 418.16 L1209.30 416.66 L1210.30 415.20 L1211.30 413.81 L1212.30 412.47 L1213.30 411.20 L1214.30 409.99 L1215.30 408.85 L1216.30 407.77 L1217.30 406.77 L1218.30 405.83 L1219.30 404.95 L1220.30 404.13 L1221.30 403.37 L1222.30 402.66 L1223.30 402.00 L1224.30 401.38 L1225.30 400.82 L1226.30 400.29 L1227.30 399.81 L1228.30 399.38 L1229.30 398.99 L1230.30 398.65 L1231.30 398.35 L1232.30 398.09 L1233.30 397.88 L1234.30 397.71 L1235.30 397.58 L1236.30 397.50 L1237.30 397.45 L1238.30 397.45 L1239.30 397.48 L1240.30 397.56 L1241.30 397.68 L1242.30 397.85 L1243.30 398.06 L1244.30 398.31 L1245.30 398.60 L1246.30 398.95 L1247.30 399.33 L1248.30 399.77 L1249.30 400.26 L1250.30 400.79 L1251.30 401.39 L1252.30 402.03 L1253.30 402.74 L1254.30 403.51 L1255.30 404.35 L1256.30 405.25 L1257.30 406.22 L1258.30 407.25 L1259.30 408.36 L1260.30 409.54 L1261.30 410.80 L1262.30 412.14 L1263.30 413.56 L1264.30 415.07 L1265.30 416.67 L1266.30 418.37 L1267.30 420.18 L1268.30 422.09 L1269.30 424.11 L1270.30 426.24 L1271.30 428.49 L1272.30 430.84 L1273.30 433.31 L1274.30 435.89 L1275.30 438.57 L1276.30 441.35 L1277.30 444.22 L1278.30 447.17 L1279.30 450.21 L1280.30 453.30 L1281.30 456.45 L1282.30 459.63 L1283.30 462.84 L1284.30 466.06 L1285.30 469.28 L1286.30 472.47 L1287.30 475.63 L1288.30 478.73 L1289.30 481.75 L1290.30 484.69 L1291.30 487.53 L1292.30 490.26 L1293.30 492.86 L1294.30 495.32 L1295.30 497.65 L1296.30 499.83 L1297.30 501.87 L1298.30 503.77 L1299.30 505.53 L1300.30 507.16 L1301.30 508.66 L1302.30 510.04 L1303.30 511.30 L1304.30 512.46 L1305.30 513.51 L1306.30 514.47 L1307.30 515.34 L1308.30 516.14 L1309.30 516.87 L1310.30 517.53 L1311.30 518.15 L1312.30 518.72 L1313.30 519.26 L1314.30 519.77 L1315.30 520.27 L1316.30 520.74 L1317.30 521.20 L1318.30 521.66 L1319.30 522.11 L1320.30 522.55 L1321.30 522.99 L1321.80 523.21 L1322 552.7 L316.3 552.7 Z" fill="url(#bg1)"/><path d="M316.30 488.60 L317.30 488.57 L318.30 488.54 L319.30 488.52 L320.30 488.49 L321.30 488.46 L322.30 488.43 L323.30 488.40 L324.30 488.38 L325.30 488.35 L326.30 488.32 L327.30 488.29 L328.30 488.26 L329.30 488.24 L330.30 488.21 L331.30 488.18 L332.30 488.15 L333.30 488.12 L334.30 488.10 L335.30 488.07 L336.30 488.04 L337.30 488.01 L338.30 487.98 L339.30 487.96 L340.30 487.93 L341.30 487.90 L342.30 487.87 L343.30 487.84 L344.30 487.82 L345.30 487.79 L346.30 487.76 L347.30 487.73 L348.30 487.70 L349.30 487.68 L350.30 487.65 L351.30 487.62 L352.30 487.59 L353.30 487.56 L354.30 487.54 L355.30 487.51 L356.30 487.48 L357.30 487.45 L358.30 487.42 L359.30 487.39 L360.30 487.36 L361.30 487.34 L362.30 487.31 L363.30 487.28 L364.30 487.25 L365.30 487.22 L366.30 487.18 L367.30 487.15 L368.30 487.12 L369.30 487.09 L370.30 487.06 L371.30 487.02 L372.30 486.99 L373.30 486.96 L374.30 486.92 L375.30 486.89 L376.30 486.86 L377.30 486.82 L378.30 486.79 L379.30 486.75 L380.30 486.72 L381.30 486.68 L382.30 486.65 L383.30 486.62 L384.30 486.58 L385.30 486.55 L386.30 486.51 L387.30 486.48 L388.30 486.44 L389.30 486.41 L390.30 486.37 L391.30 486.34 L392.30 486.30 L393.30 486.27 L394.30 486.23 L395.30 486.19 L396.30 486.14 L397.30 486.09 L398.30 486.04 L399.30 485.97 L400.30 485.90 L401.30 485.81 L402.30 485.71 L403.30 485.58 L404.30 485.44 L405.30 485.27 L406.30 485.08 L407.30 484.85 L408.30 484.59 L409.30 484.30 L410.30 483.96 L411.30 483.59 L412.30 483.17 L413.30 482.71 L414.30 482.20 L415.30 481.63 L416.30 481.02 L417.30 480.34 L418.30 479.61 L419.30 478.81 L420.30 477.95 L421.30 477.02 L422.30 476.02 L423.30 474.94 L424.30 473.78 L425.30 472.54 L426.30 471.22 L427.30 469.82 L428.30 468.33 L429.30 466.77 L430.30 465.12 L431.30 463.39 L432.30 461.59 L433.30 459.72 L434.30 457.79 L435.30 455.80 L436.30 453.76 L437.30 451.69 L438.30 449.58 L439.30 447.45 L440.30 445.32 L441.30 443.19 L442.30 441.07 L443.30 438.99 L444.30 436.94 L445.30 434.93 L446.30 432.98 L447.30 431.09 L448.30 429.27 L449.30 427.50 L450.30 425.81 L451.30 424.18 L452.30 422.62 L453.30 421.12 L454.30 419.70 L455.30 418.35 L456.30 417.06 L457.30 415.84 L458.30 414.68 L459.30 413.60 L460.30 412.58 L461.30 411.62 L462.30 410.72 L463.30 409.89 L464.30 409.12 L465.30 408.40 L466.30 407.75 L467.30 407.16 L468.30 406.62 L469.30 406.13 L470.30 405.69 L471.30 405.30 L472.30 404.95 L473.30 404.64 L474.30 404.36 L475.30 404.11 L476.30 403.89 L477.30 403.69 L478.30 403.51 L479.30 403.35 L480.30 403.21 L481.30 403.08 L482.30 402.98 L483.30 402.89 L484.30 402.83 L485.30 402.78 L486.30 402.75 L487.30 402.73 L488.30 402.73 L489.30 402.75 L490.30 402.77 L491.30 402.81 L492.30 402.86 L493.30 402.92 L494.30 402.98 L495.30 403.05 L496.30 403.13 L497.30 403.22 L498.30 403.31 L499.30 403.42 L500.30 403.53 L501.30 403.66 L502.30 403.80 L503.30 403.97 L504.30 404.15 L505.30 404.35 L506.30 404.58 L507.30 404.83 L508.30 405.10 L509.30 405.40 L510.30 405.72 L511.30 406.06 L512.30 406.41 L513.30 406.79 L514.30 407.17 L515.30 407.57 L516.30 407.98 L517.30 408.39 L518.30 408.80 L519.30 409.22 L520.30 409.64 L521.30 410.05 L522.30 410.46 L523.30 410.87 L524.30 411.27 L525.30 411.66 L526.30 412.05 L527.30 412.43 L528.30 412.80 L529.30 413.16 L530.30 413.51 L531.30 413.85 L532.30 414.19 L533.30 414.52 L534.30 414.84 L535.30 415.16 L536.30 415.47 L537.30 415.78 L538.30 416.08 L539.30 416.37 L540.30 416.66 L541.30 416.94 L542.30 417.22 L543.30 417.48 L544.30 417.73 L545.30 417.97 L546.30 418.20 L547.30 418.40 L548.30 418.60 L549.30 418.77 L550.30 418.92 L551.30 419.06 L552.30 419.18 L553.30 419.28 L554.30 419.37 L555.30 419.45 L556.30 419.51 L557.30 419.57 L558.30 419.61 L559.30 419.65 L560.30 419.68 L561.30 419.71 L562.30 419.72 L563.30 419.73 L564.30 419.74 L565.30 419.73 L566.30 419.72 L567.30 419.69 L568.30 419.66 L569.30 419.61 L570.30 419.55 L571.30 419.48 L572.30 419.39 L573.30 419.30 L574.30 419.19 L575.30 419.07 L576.30 418.93 L577.30 418.79 L578.30 418.63 L579.30 418.46 L580.30 418.28 L581.30 418.07 L582.30 417.85 L583.30 417.60 L584.30 417.32 L585.30 417.02 L586.30 416.68 L587.30 416.31 L588.30 415.90 L589.30 415.45 L590.30 414.97 L591.30 414.46 L592.30 413.91 L593.30 413.33 L594.30 412.73 L595.30 412.10 L596.30 411.46 L597.30 410.80 L598.30 410.14 L599.30 409.46 L600.30 408.78 L601.30 408.10 L602.30 407.42 L603.30 406.74 L604.30 406.06 L605.30 405.39 L606.30 404.73 L607.30 404.07 L608.30 403.42 L609.30 402.78 L610.30 402.15 L611.30 401.53 L612.30 400.91 L613.30 400.31 L614.30 399.71 L615.30 399.12 L616.30 398.54 L617.30 397.96 L618.30 397.40 L619.30 396.84 L620.30 396.29 L621.30 395.76 L622.30 395.23 L623.30 394.73 L624.30 394.24 L625.30 393.78 L626.30 393.34 L627.30 392.93 L628.30 392.54 L629.30 392.19 L630.30 391.86 L631.30 391.56 L632.30 391.29 L633.30 391.05 L634.30 390.83 L635.30 390.63 L636.30 390.45 L637.30 390.28 L638.30 390.13 L639.30 389.98 L640.30 389.85 L641.30 389.73 L642.30 389.61 L643.30 389.50 L644.30 389.40 L645.30 389.31 L646.30 389.24 L647.30 389.17 L648.30 389.12 L649.30 389.09 L650.30 389.08 L651.30 389.08 L652.30 389.11 L653.30 389.16 L654.30 389.22 L655.30 389.31 L656.30 389.41 L657.30 389.54 L658.30 389.69 L659.30 389.86 L660.30 390.05 L661.30 390.26 L662.30 390.50 L663.30 390.78 L664.30 391.08 L665.30 391.43 L666.30 391.81 L667.30 392.24 L668.30 392.72 L669.30 393.24 L670.30 393.82 L671.30 394.44 L672.30 395.11 L673.30 395.82 L674.30 396.59 L675.30 397.40 L676.30 398.25 L677.30 399.15 L678.30 400.09 L679.30 401.09 L680.30 402.13 L681.30 403.22 L682.30 404.36 L683.30 405.55 L684.30 406.79 L685.30 408.09 L686.30 409.43 L687.30 410.83 L688.30 412.27 L689.30 413.75 L690.30 415.27 L691.30 416.83 L692.30 418.43 L693.30 420.05 L694.30 421.69 L695.30 423.36 L696.30 425.03 L697.30 426.70 L698.30 428.37 L699.30 430.02 L700.30 431.65 L701.30 433.24 L702.30 434.78 L703.30 436.27 L704.30 437.70 L705.30 439.07 L706.30 440.36 L707.30 441.59 L708.30 442.75 L709.30 443.85 L710.30 444.88 L711.30 445.85 L712.30 446.77 L713.30 447.63 L714.30 448.44 L715.30 449.20 L716.30 449.91 L717.30 450.57 L718.30 451.19 L719.30 451.76 L720.30 452.28 L721.30 452.76 L722.30 453.20 L723.30 453.60 L724.30 453.97 L725.30 454.30 L726.30 454.60 L727.30 454.87 L728.30 455.12 L729.30 455.34 L730.30 455.53 L731.30 455.70 L732.30 455.85 L733.30 455.97 L734.30 456.07 L735.30 456.14 L736.30 456.19 L737.30 456.22 L738.30 456.23 L739.30 456.21 L740.30 456.18 L741.30 456.13 L742.30 456.06 L743.30 455.98 L744.30 455.88 L745.30 455.77 L746.30 455.64 L747.30 455.49 L748.30 455.32 L749.30 455.13 L750.30 454.92 L751.30 454.68 L752.30 454.41 L753.30 454.11 L754.30 453.78 L755.30 453.42 L756.30 453.03 L757.30 452.61 L758.30 452.15 L759.30 451.66 L760.30 451.13 L761.30 450.57 L762.30 449.96 L763.30 449.31 L764.30 448.62 L765.30 447.88 L766.30 447.09 L767.30 446.26 L768.30 445.37 L769.30 444.44 L770.30 443.47 L771.30 442.47 L772.30 441.43 L773.30 440.36 L774.30 439.28 L775.30 438.19 L776.30 437.09 L777.30 435.99 L778.30 434.89 L779.30 433.81 L780.30 432.73 L781.30 431.68 L782.30 430.64 L783.30 429.62 L784.30 428.62 L785.30 427.64 L786.30 426.68 L787.30 425.74 L788.30 424.83 L789.30 423.93 L790.30 423.07 L791.30 422.23 L792.30 421.42 L793.30 420.65 L794.30 419.91 L795.30 419.22 L796.30 418.58 L797.30 417.99 L798.30 417.44 L799.30 416.95 L800.30 416.51 L801.30 416.11 L802.30 415.76 L803.30 415.45 L804.30 415.17 L805.30 414.92 L806.30 414.70 L807.30 414.50 L808.30 414.32 L809.30 414.16 L810.30 414.01 L811.30 413.87 L812.30 413.75 L813.30 413.63 L814.30 413.53 L815.30 413.44 L816.30 413.36 L817.30 413.29 L818.30 413.23 L819.30 413.18 L820.30 413.13 L821.30 413.10 L822.30 413.07 L823.30 413.05 L824.30 413.04 L825.30 413.02 L826.30 413.02 L827.30 413.01 L828.30 413.00 L829.30 413.00 L830.30 413.00 L831.30 413.00 L832.30 412.99 L833.30 412.99 L834.30 412.99 L835.30 412.98 L836.30 412.98 L837.30 412.97 L838.30 412.97 L839.30 412.96 L840.30 412.95 L841.30 412.93 L842.30 412.92 L843.30 412.91 L844.30 412.89 L845.30 412.87 L846.30 412.85 L847.30 412.84 L848.30 412.82 L849.30 412.80 L850.30 412.78 L851.30 412.75 L852.30 412.73 L853.30 412.71 L854.30 412.69 L855.30 412.67 L856.30 412.65 L857.30 412.63 L858.30 412.60 L859.30 412.58 L860.30 412.56 L861.30 412.54 L862.30 412.52 L863.30 412.50 L864.30 412.48 L865.30 412.45 L866.30 412.43 L867.30 412.41 L868.30 412.39 L869.30 412.37 L870.30 412.35 L871.30 412.32 L872.30 412.30 L873.30 412.28 L874.30 412.26 L875.30 412.24 L876.30 412.22 L877.30 412.20 L878.30 412.18 L879.30 412.16 L880.30 412.14 L881.30 412.13 L882.30 412.11 L883.30 412.10 L884.30 412.09 L885.30 412.08 L886.30 412.07 L887.30 412.07 L888.30 412.07 L889.30 412.06 L890.30 412.07 L891.30 412.07 L892.30 412.07 L893.30 412.08 L894.30 412.08 L895.30 412.09 L896.30 412.10 L897.30 412.11 L898.30 412.12 L899.30 412.12 L900.30 412.13 L901.30 412.14 L902.30 412.15 L903.30 412.16 L904.30 412.17 L905.30 412.18 L906.30 412.19 L907.30 412.20 L908.30 412.21 L909.30 412.22 L910.30 412.23 L911.30 412.24 L912.30 412.25 L913.30 412.26 L914.30 412.27 L915.30 412.28 L916.30 412.29 L917.30 412.30 L918.30 412.31 L919.30 412.33 L920.30 412.35 L921.30 412.37 L922.30 412.39 L923.30 412.42 L924.30 412.46 L925.30 412.50 L926.30 412.55 L927.30 412.60 L928.30 412.67 L929.30 412.74 L930.30 412.82 L931.30 412.90 L932.30 413.00 L933.30 413.10 L934.30 413.20 L935.30 413.32 L936.30 413.43 L937.30 413.55 L938.30 413.67 L939.30 413.79 L940.30 413.92 L941.30 414.04 L942.30 414.17 L943.30 414.29 L944.30 414.42 L945.30 414.55 L946.30 414.67 L947.30 414.79 L948.30 414.91 L949.30 415.03 L950.30 415.15 L951.30 415.26 L952.30 415.36 L953.30 415.46 L954.30 415.55 L955.30 415.64 L956.30 415.72 L957.30 415.79 L958.30 415.86 L959.30 415.92 L960.30 415.97 L961.30 416.01 L962.30 416.06 L963.30 416.09 L964.30 416.12 L965.30 416.15 L966.30 416.18 L967.30 416.20 L968.30 416.23 L969.30 416.25 L970.30 416.27 L971.30 416.29 L972.30 416.31 L973.30 416.33 L974.30 416.35 L975.30 416.37 L976.30 416.39 L977.30 416.41 L978.30 416.44 L979.30 416.46 L980.30 416.48 L981.30 416.51 L982.30 416.54 L983.30 416.58 L984.30 416.62 L985.30 416.66 L986.30 416.72 L987.30 416.79 L988.30 416.86 L989.30 416.95 L990.30 417.06 L991.30 417.18 L992.30 417.32 L993.30 417.47 L994.30 417.64 L995.30 417.83 L996.30 418.03 L997.30 418.25 L998.30 418.49 L999.30 418.75 L1000.30 419.03 L1001.30 419.33 L1002.30 419.64 L1003.30 419.98 L1004.30 420.35 L1005.30 420.74 L1006.30 421.16 L1007.30 421.62 L1008.30 422.10 L1009.30 422.62 L1010.30 423.18 L1011.30 423.78 L1012.30 424.42 L1013.30 425.10 L1014.30 425.83 L1015.30 426.62 L1016.30 427.45 L1017.30 428.33 L1018.30 429.26 L1019.30 430.23 L1020.30 431.25 L1021.30 432.31 L1022.30 433.40 L1023.30 434.52 L1024.30 435.67 L1025.30 436.84 L1026.30 438.02 L1027.30 439.21 L1028.30 440.40 L1029.30 441.60 L1030.30 442.79 L1031.30 443.98 L1032.30 445.16 L1033.30 446.33 L1034.30 447.49 L1035.30 448.64 L1036.30 449.76 L1037.30 450.87 L1038.30 451.94 L1039.30 452.99 L1040.30 454.00 L1041.30 454.97 L1042.30 455.89 L1043.30 456.77 L1044.30 457.59 L1045.30 458.36 L1046.30 459.07 L1047.30 459.73 L1048.30 460.34 L1049.30 460.89 L1050.30 461.40 L1051.30 461.87 L1052.30 462.31 L1053.30 462.71 L1054.30 463.09 L1055.30 463.43 L1056.30 463.76 L1057.30 464.07 L1058.30 464.35 L1059.30 464.62 L1060.30 464.87 L1061.30 465.10 L1062.30 465.31 L1063.30 465.50 L1064.30 465.68 L1065.30 465.84 L1066.30 465.98 L1067.30 466.11 L1068.30 466.23 L1069.30 466.34 L1070.30 466.44 L1071.30 466.53 L1072.30 466.62 L1073.30 466.71 L1074.30 466.79 L1075.30 466.86 L1076.30 466.94 L1077.30 467.02 L1078.30 467.09 L1079.30 467.17 L1080.30 467.24 L1081.30 467.31 L1082.30 467.39 L1083.30 467.46 L1084.30 467.54 L1085.30 467.61 L1086.30 467.69 L1087.30 467.77 L1088.30 467.85 L1089.30 467.93 L1090.30 468.01 L1091.30 468.10 L1092.30 468.20 L1093.30 468.30 L1094.30 468.41 L1095.30 468.54 L1096.30 468.67 L1097.30 468.82 L1098.30 468.99 L1099.30 469.17 L1100.30 469.37 L1101.30 469.58 L1102.30 469.81 L1103.30 470.06 L1104.30 470.33 L1105.30 470.60 L1106.30 470.89 L1107.30 471.18 L1108.30 471.49 L1109.30 471.80 L1110.30 472.12 L1111.30 472.44 L1112.30 472.76 L1113.30 473.08 L1114.30 473.40 L1115.30 473.72 L1116.30 474.04 L1117.30 474.35 L1118.30 474.66 L1119.30 474.96 L1120.30 475.26 L1121.30 475.54 L1122.30 475.81 L1123.30 476.07 L1124.30 476.32 L1125.30 476.55 L1126.30 476.76 L1127.30 476.96 L1128.30 477.15 L1129.30 477.32 L1130.30 477.48 L1131.30 477.62 L1132.30 477.76 L1133.30 477.89 L1134.30 478.01 L1135.30 478.12 L1136.30 478.23 L1137.30 478.34 L1138.30 478.45 L1139.30 478.55 L1140.30 478.65 L1141.30 478.75 L1142.30 478.84 L1143.30 478.94 L1144.30 479.03 L1145.30 479.12 L1146.30 479.20 L1147.30 479.28 L1148.30 479.35 L1149.30 479.42 L1150.30 479.48 L1151.30 479.53 L1152.30 479.57 L1153.30 479.60 L1154.30 479.62 L1155.30 479.64 L1156.30 479.65 L1157.30 479.65 L1158.30 479.64 L1159.30 479.63 L1160.30 479.61 L1161.30 479.59 L1162.30 479.56 L1163.30 479.53 L1164.30 479.50 L1165.30 479.47 L1166.30 479.44 L1167.30 479.40 L1168.30 479.37 L1169.30 479.33 L1170.30 479.28 L1171.30 479.24 L1172.30 479.18 L1173.30 479.12 L1174.30 479.06 L1175.30 478.98 L1176.30 478.90 L1177.30 478.80 L1178.30 478.69 L1179.30 478.57 L1180.30 478.43 L1181.30 478.29 L1182.30 478.13 L1183.30 477.95 L1184.30 477.77 L1185.30 477.58 L1186.30 477.37 L1187.30 477.17 L1188.30 476.95 L1189.30 476.73 L1190.30 476.51 L1191.30 476.28 L1192.30 476.06 L1193.30 475.83 L1194.30 475.60 L1195.30 475.38 L1196.30 475.16 L1197.30 474.93 L1198.30 474.72 L1199.30 474.50 L1200.30 474.30 L1201.30 474.10 L1202.30 473.91 L1203.30 473.72 L1204.30 473.55 L1205.30 473.39 L1206.30 473.25 L1207.30 473.11 L1208.30 472.99 L1209.30 472.88 L1210.30 472.77 L1211.30 472.68 L1212.30 472.60 L1213.30 472.53 L1214.30 472.46 L1215.30 472.39 L1216.30 472.33 L1217.30 472.28 L1218.30 472.22 L1219.30 472.17 L1220.30 472.12 L1221.30 472.07 L1222.30 472.02 L1223.30 471.97 L1224.30 471.93 L1225.30 471.88 L1226.30 471.84 L1227.30 471.80 L1228.30 471.76 L1229.30 471.72 L1230.30 471.70 L1231.30 471.68 L1232.30 471.66 L1233.30 471.66 L1234.30 471.67 L1235.30 471.68 L1236.30 471.71 L1237.30 471.75 L1238.30 471.81 L1239.30 471.87 L1240.30 471.95 L1241.30 472.05 L1242.30 472.15 L1243.30 472.27 L1244.30 472.40 L1245.30 472.55 L1246.30 472.71 L1247.30 472.90 L1248.30 473.10 L1249.30 473.34 L1250.30 473.60 L1251.30 473.90 L1252.30 474.23 L1253.30 474.61 L1254.30 475.04 L1255.30 475.51 L1256.30 476.04 L1257.30 476.62 L1258.30 477.25 L1259.30 477.94 L1260.30 478.68 L1261.30 479.48 L1262.30 480.35 L1263.30 481.27 L1264.30 482.26 L1265.30 483.31 L1266.30 484.43 L1267.30 485.61 L1268.30 486.86 L1269.30 488.17 L1270.30 489.55 L1271.30 490.98 L1272.30 492.47 L1273.30 494.01 L1274.30 495.60 L1275.30 497.22 L1276.30 498.88 L1277.30 500.56 L1278.30 502.27 L1279.30 504.00 L1280.30 505.74 L1281.30 507.48 L1282.30 509.22 L1283.30 510.96 L1284.30 512.67 L1285.30 514.36 L1286.30 516.03 L1287.30 517.65 L1288.30 519.22 L1289.30 520.75 L1290.30 522.22 L1291.30 523.63 L1292.30 524.98 L1293.30 526.27 L1294.30 527.50 L1295.30 528.68 L1296.30 529.79 L1297.30 530.86 L1298.30 531.86 L1299.30 532.82 L1300.30 533.72 L1301.30 534.57 L1302.30 535.37 L1303.30 536.10 L1304.30 536.79 L1305.30 537.42 L1306.30 537.99 L1307.30 538.52 L1308.30 538.99 L1309.30 539.42 L1310.30 539.81 L1311.30 540.17 L1312.30 540.50 L1313.30 540.81 L1314.30 541.09 L1315.30 541.36 L1316.30 541.62 L1317.30 541.88 L1318.30 542.12 L1319.30 542.36 L1320.30 542.60 L1321.30 542.84 L1321.80 542.95" fill="none" stroke="#8db5c9" stroke-width="2" stroke-dasharray="0.1 3.8" stroke-linecap="round"/><path d="M316.30 476.70 L317.30 476.53 L318.30 476.36 L319.30 476.18 L320.30 476.01 L321.30 475.84 L322.30 475.67 L323.30 475.49 L324.30 475.32 L325.30 475.15 L326.30 474.97 L327.30 474.80 L328.30 474.62 L329.30 474.45 L330.30 474.26 L331.30 474.08 L332.30 473.88 L333.30 473.68 L334.30 473.46 L335.30 473.23 L336.30 472.98 L337.30 472.70 L338.30 472.40 L339.30 472.07 L340.30 471.70 L341.30 471.30 L342.30 470.86 L343.30 470.38 L344.30 469.86 L345.30 469.31 L346.30 468.72 L347.30 468.10 L348.30 467.45 L349.30 466.79 L350.30 466.10 L351.30 465.40 L352.30 464.69 L353.30 463.98 L354.30 463.26 L355.30 462.54 L356.30 461.82 L357.30 461.10 L358.30 460.39 L359.30 459.69 L360.30 458.99 L361.30 458.30 L362.30 457.63 L363.30 456.97 L364.30 456.32 L365.30 455.70 L366.30 455.10 L367.30 454.52 L368.30 453.96 L369.30 453.44 L370.30 452.94 L371.30 452.48 L372.30 452.04 L373.30 451.63 L374.30 451.25 L375.30 450.89 L376.30 450.55 L377.30 450.23 L378.30 449.93 L379.30 449.64 L380.30 449.36 L381.30 449.08 L382.30 448.82 L383.30 448.56 L384.30 448.30 L385.30 448.05 L386.30 447.80 L387.30 447.55 L388.30 447.32 L389.30 447.09 L390.30 446.86 L391.30 446.65 L392.30 446.45 L393.30 446.26 L394.30 446.09 L395.30 445.94 L396.30 445.80 L397.30 445.69 L398.30 445.59 L399.30 445.52 L400.30 445.46 L401.30 445.42 L402.30 445.39 L403.30 445.38 L404.30 445.38 L405.30 445.39 L406.30 445.41 L407.30 445.44 L408.30 445.47 L409.30 445.51 L410.30 445.55 L411.30 445.59 L412.30 445.64 L413.30 445.70 L414.30 445.76 L415.30 445.82 L416.30 445.89 L417.30 445.97 L418.30 446.06 L419.30 446.15 L420.30 446.26 L421.30 446.37 L422.30 446.49 L423.30 446.61 L424.30 446.75 L425.30 446.88 L426.30 447.03 L427.30 447.18 L428.30 447.33 L429.30 447.49 L430.30 447.65 L431.30 447.81 L432.30 447.98 L433.30 448.14 L434.30 448.31 L435.30 448.49 L436.30 448.66 L437.30 448.84 L438.30 449.02 L439.30 449.21 L440.30 449.41 L441.30 449.61 L442.30 449.81 L443.30 450.02 L444.30 450.24 L445.30 450.46 L446.30 450.69 L447.30 450.93 L448.30 451.16 L449.30 451.40 L450.30 451.65 L451.30 451.89 L452.30 452.14 L453.30 452.38 L454.30 452.62 L455.30 452.87 L456.30 453.10 L457.30 453.34 L458.30 453.56 L459.30 453.78 L460.30 453.99 L461.30 454.19 L462.30 454.37 L463.30 454.55 L464.30 454.70 L465.30 454.85 L466.30 454.98 L467.30 455.09 L468.30 455.19 L469.30 455.28 L470.30 455.36 L471.30 455.42 L472.30 455.48 L473.30 455.53 L474.30 455.58 L475.30 455.61 L476.30 455.64 L477.30 455.67 L478.30 455.69 L479.30 455.70 L480.30 455.70 L481.30 455.70 L482.30 455.68 L483.30 455.66 L484.30 455.62 L485.30 455.56 L486.30 455.50 L487.30 455.42 L488.30 455.33 L489.30 455.23 L490.30 455.11 L491.30 454.99 L492.30 454.85 L493.30 454.70 L494.30 454.55 L495.30 454.38 L496.30 454.21 L497.30 454.03 L498.30 453.83 L499.30 453.61 L500.30 453.38 L501.30 453.13 L502.30 452.85 L503.30 452.54 L504.30 452.20 L505.30 451.82 L506.30 451.41 L507.30 450.95 L508.30 450.46 L509.30 449.93 L510.30 449.36 L511.30 448.75 L512.30 448.12 L513.30 447.45 L514.30 446.76 L515.30 446.05 L516.30 445.32 L517.30 444.58 L518.30 443.82 L519.30 443.05 L520.30 442.27 L521.30 441.48 L522.30 440.69 L523.30 439.89 L524.30 439.09 L525.30 438.29 L526.30 437.49 L527.30 436.68 L528.30 435.89 L529.30 435.10 L530.30 434.32 L531.30 433.55 L532.30 432.81 L533.30 432.08 L534.30 431.38 L535.30 430.71 L536.30 430.07 L537.30 429.47 L538.30 428.89 L539.30 428.36 L540.30 427.86 L541.30 427.39 L542.30 426.95 L543.30 426.54 L544.30 426.16 L545.30 425.79 L546.30 425.45 L547.30 425.11 L548.30 424.79 L549.30 424.48 L550.30 424.19 L551.30 423.89 L552.30 423.61 L553.30 423.34 L554.30 423.08 L555.30 422.83 L556.30 422.60 L557.30 422.38 L558.30 422.18 L559.30 422.00 L560.30 421.84 L561.30 421.69 L562.30 421.57 L563.30 421.47 L564.30 421.38 L565.30 421.31 L566.30 421.26 L567.30 421.21 L568.30 421.18 L569.30 421.16 L570.30 421.15 L571.30 421.14 L572.30 421.14 L573.30 421.14 L574.30 421.15 L575.30 421.17 L576.30 421.19 L577.30 421.22 L578.30 421.25 L579.30 421.29 L580.30 421.34 L581.30 421.39 L582.30 421.45 L583.30 421.51 L584.30 421.58 L585.30 421.66 L586.30 421.74 L587.30 421.82 L588.30 421.91 L589.30 422.00 L590.30 422.10 L591.30 422.20 L592.30 422.30 L593.30 422.41 L594.30 422.52 L595.30 422.64 L596.30 422.76 L597.30 422.89 L598.30 423.03 L599.30 423.16 L600.30 423.31 L601.30 423.46 L602.30 423.61 L603.30 423.77 L604.30 423.94 L605.30 424.10 L606.30 424.27 L607.30 424.44 L608.30 424.62 L609.30 424.79 L610.30 424.97 L611.30 425.14 L612.30 425.32 L613.30 425.49 L614.30 425.67 L615.30 425.84 L616.30 426.01 L617.30 426.18 L618.30 426.35 L619.30 426.51 L620.30 426.67 L621.30 426.82 L622.30 426.97 L623.30 427.11 L624.30 427.24 L625.30 427.36 L626.30 427.47 L627.30 427.58 L628.30 427.67 L629.30 427.76 L630.30 427.83 L631.30 427.90 L632.30 427.97 L633.30 428.03 L634.30 428.08 L635.30 428.13 L636.30 428.18 L637.30 428.22 L638.30 428.26 L639.30 428.31 L640.30 428.35 L641.30 428.39 L642.30 428.43 L643.30 428.47 L644.30 428.51 L645.30 428.56 L646.30 428.60 L647.30 428.65 L648.30 428.70 L649.30 428.76 L650.30 428.82 L651.30 428.88 L652.30 428.95 L653.30 429.03 L654.30 429.11 L655.30 429.20 L656.30 429.29 L657.30 429.39 L658.30 429.50 L659.30 429.61 L660.30 429.73 L661.30 429.86 L662.30 429.99 L663.30 430.13 L664.30 430.28 L665.30 430.45 L666.30 430.62 L667.30 430.81 L668.30 431.01 L669.30 431.24 L670.30 431.48 L671.30 431.75 L672.30 432.05 L673.30 432.37 L674.30 432.71 L675.30 433.09 L676.30 433.49 L677.30 433.91 L678.30 434.36 L679.30 434.84 L680.30 435.35 L681.30 435.88 L682.30 436.44 L683.30 437.02 L684.30 437.64 L685.30 438.28 L686.30 438.95 L687.30 439.66 L688.30 440.39 L689.30 441.15 L690.30 441.93 L691.30 442.74 L692.30 443.57 L693.30 444.41 L694.30 445.26 L695.30 446.11 L696.30 446.97 L697.30 447.83 L698.30 448.68 L699.30 449.53 L700.30 450.36 L701.30 451.17 L702.30 451.96 L703.30 452.74 L704.30 453.49 L705.30 454.22 L706.30 454.92 L707.30 455.60 L708.30 456.26 L709.30 456.89 L710.30 457.50 L711.30 458.08 L712.30 458.64 L713.30 459.17 L714.30 459.66 L715.30 460.13 L716.30 460.57 L717.30 460.98 L718.30 461.36 L719.30 461.70 L720.30 462.02 L721.30 462.30 L722.30 462.56 L723.30 462.80 L724.30 463.02 L725.30 463.21 L726.30 463.39 L727.30 463.55 L728.30 463.70 L729.30 463.83 L730.30 463.94 L731.30 464.04 L732.30 464.12 L733.30 464.18 L734.30 464.22 L735.30 464.24 L736.30 464.24 L737.30 464.22 L738.30 464.17 L739.30 464.10 L740.30 464.01 L741.30 463.91 L742.30 463.78 L743.30 463.64 L744.30 463.47 L745.30 463.29 L746.30 463.09 L747.30 462.87 L748.30 462.63 L749.30 462.36 L750.30 462.07 L751.30 461.75 L752.30 461.39 L753.30 461.01 L754.30 460.59 L755.30 460.13 L756.30 459.64 L757.30 459.11 L758.30 458.55 L759.30 457.93 L760.30 457.28 L761.30 456.57 L762.30 455.81 L763.30 454.99 L764.30 454.11 L765.30 453.16 L766.30 452.15 L767.30 451.07 L768.30 449.92 L769.30 448.72 L770.30 447.45 L771.30 446.14 L772.30 444.78 L773.30 443.39 L774.30 441.99 L775.30 440.57 L776.30 439.15 L777.30 437.74 L778.30 436.35 L779.30 434.98 L780.30 433.65 L781.30 432.35 L782.30 431.09 L783.30 429.88 L784.30 428.70 L785.30 427.57 L786.30 426.48 L787.30 425.43 L788.30 424.42 L789.30 423.45 L790.30 422.53 L791.30 421.65 L792.30 420.81 L793.30 420.01 L794.30 419.26 L795.30 418.56 L796.30 417.90 L797.30 417.28 L798.30 416.71 L799.30 416.17 L800.30 415.67 L801.30 415.20 L802.30 414.76 L803.30 414.34 L804.30 413.95 L805.30 413.58 L806.30 413.24 L807.30 412.91 L808.30 412.60 L809.30 412.32 L810.30 412.06 L811.30 411.82 L812.30 411.60 L813.30 411.41 L814.30 411.24 L815.30 411.08 L816.30 410.95 L817.30 410.83 L818.30 410.72 L819.30 410.63 L820.30 410.55 L821.30 410.47 L822.30 410.41 L823.30 410.34 L824.30 410.28 L825.30 410.22 L826.30 410.15 L827.30 410.09 L828.30 410.03 L829.30 409.96 L830.30 409.90 L831.30 409.83 L832.30 409.75 L833.30 409.68 L834.30 409.60 L835.30 409.53 L836.30 409.45 L837.30 409.37 L838.30 409.28 L839.30 409.20 L840.30 409.11 L841.30 409.02 L842.30 408.94 L843.30 408.84 L844.30 408.75 L845.30 408.65 L846.30 408.55 L847.30 408.45 L848.30 408.34 L849.30 408.23 L850.30 408.11 L851.30 407.98 L852.30 407.85 L853.30 407.72 L854.30 407.58 L855.30 407.44 L856.30 407.29 L857.30 407.13 L858.30 406.98 L859.30 406.82 L860.30 406.66 L861.30 406.50 L862.30 406.34 L863.30 406.17 L864.30 406.01 L865.30 405.85 L866.30 405.69 L867.30 405.53 L868.30 405.37 L869.30 405.21 L870.30 405.06 L871.30 404.92 L872.30 404.77 L873.30 404.64 L874.30 404.51 L875.30 404.38 L876.30 404.27 L877.30 404.16 L878.30 404.06 L879.30 403.96 L880.30 403.87 L881.30 403.79 L882.30 403.71 L883.30 403.64 L884.30 403.57 L885.30 403.50 L886.30 403.44 L887.30 403.37 L888.30 403.31 L889.30 403.25 L890.30 403.20 L891.30 403.14 L892.30 403.09 L893.30 403.04 L894.30 402.99 L895.30 402.94 L896.30 402.90 L897.30 402.86 L898.30 402.82 L899.30 402.79 L900.30 402.76 L901.30 402.74 L902.30 402.72 L903.30 402.71 L904.30 402.69 L905.30 402.69 L906.30 402.68 L907.30 402.68 L908.30 402.68 L909.30 402.69 L910.30 402.69 L911.30 402.70 L912.30 402.70 L913.30 402.71 L914.30 402.72 L915.30 402.73 L916.30 402.74 L917.30 402.74 L918.30 402.75 L919.30 402.76 L920.30 402.77 L921.30 402.78 L922.30 402.79 L923.30 402.80 L924.30 402.81 L925.30 402.82 L926.30 402.83 L927.30 402.84 L928.30 402.86 L929.30 402.87 L930.30 402.89 L931.30 402.91 L932.30 402.94 L933.30 402.96 L934.30 403.00 L935.30 403.03 L936.30 403.07 L937.30 403.11 L938.30 403.16 L939.30 403.21 L940.30 403.26 L941.30 403.31 L942.30 403.37 L943.30 403.43 L944.30 403.49 L945.30 403.55 L946.30 403.62 L947.30 403.68 L948.30 403.74 L949.30 403.80 L950.30 403.86 L951.30 403.92 L952.30 403.98 L953.30 404.03 L954.30 404.08 L955.30 404.13 L956.30 404.18 L957.30 404.22 L958.30 404.26 L959.30 404.29 L960.30 404.33 L961.30 404.36 L962.30 404.39 L963.30 404.42 L964.30 404.44 L965.30 404.46 L966.30 404.49 L967.30 404.51 L968.30 404.53 L969.30 404.55 L970.30 404.57 L971.30 404.59 L972.30 404.61 L973.30 404.63 L974.30 404.65 L975.30 404.67 L976.30 404.69 L977.30 404.71 L978.30 404.74 L979.30 404.76 L980.30 404.79 L981.30 404.82 L982.30 404.85 L983.30 404.89 L984.30 404.94 L985.30 405.00 L986.30 405.06 L987.30 405.15 L988.30 405.24 L989.30 405.36 L990.30 405.49 L991.30 405.65 L992.30 405.82 L993.30 406.02 L994.30 406.24 L995.30 406.49 L996.30 406.75 L997.30 407.04 L998.30 407.35 L999.30 407.68 L1000.30 408.04 L1001.30 408.42 L1002.30 408.82 L1003.30 409.26 L1004.30 409.72 L1005.30 410.21 L1006.30 410.74 L1007.30 411.30 L1008.30 411.90 L1009.30 412.54 L1010.30 413.22 L1011.30 413.95 L1012.30 414.72 L1013.30 415.54 L1014.30 416.41 L1015.30 417.34 L1016.30 418.32 L1017.30 419.35 L1018.30 420.43 L1019.30 421.57 L1020.30 422.76 L1021.30 423.99 L1022.30 425.27 L1023.30 426.58 L1024.30 427.93 L1025.30 429.30 L1026.30 430.69 L1027.30 432.10 L1028.30 433.52 L1029.30 434.94 L1030.30 436.37 L1031.30 437.79 L1032.30 439.20 L1033.30 440.60 L1034.30 441.98 L1035.30 443.33 L1036.30 444.65 L1037.30 445.93 L1038.30 447.18 L1039.30 448.39 L1040.30 449.56 L1041.30 450.69 L1042.30 451.76 L1043.30 452.79 L1044.30 453.78 L1045.30 454.71 L1046.30 455.60 L1047.30 456.44 L1048.30 457.22 L1049.30 457.96 L1050.30 458.65 L1051.30 459.29 L1052.30 459.88 L1053.30 460.43 L1054.30 460.94 L1055.30 461.41 L1056.30 461.84 L1057.30 462.23 L1058.30 462.59 L1059.30 462.93 L1060.30 463.23 L1061.30 463.50 L1062.30 463.75 L1063.30 463.97 L1064.30 464.17 L1065.30 464.34 L1066.30 464.50 L1067.30 464.63 L1068.30 464.76 L1069.30 464.87 L1070.30 464.96 L1071.30 465.06 L1072.30 465.14 L1073.30 465.22 L1074.30 465.30 L1075.30 465.38 L1076.30 465.45 L1077.30 465.53 L1078.30 465.61 L1079.30 465.69 L1080.30 465.77 L1081.30 465.86 L1082.30 465.95 L1083.30 466.04 L1084.30 466.14 L1085.30 466.24 L1086.30 466.35 L1087.30 466.46 L1088.30 466.58 L1089.30 466.70 L1090.30 466.82 L1091.30 466.95 L1092.30 467.09 L1093.30 467.23 L1094.30 467.38 L1095.30 467.53 L1096.30 467.70 L1097.30 467.87 L1098.30 468.05 L1099.30 468.25 L1100.30 468.45 L1101.30 468.67 L1102.30 468.90 L1103.30 469.14 L1104.30 469.38 L1105.30 469.64 L1106.30 469.90 L1107.30 470.17 L1108.30 470.45 L1109.30 470.73 L1110.30 471.01 L1111.30 471.29 L1112.30 471.58 L1113.30 471.86 L1114.30 472.15 L1115.30 472.43 L1116.30 472.71 L1117.30 472.99 L1118.30 473.26 L1119.30 473.53 L1120.30 473.79 L1121.30 474.04 L1122.30 474.28 L1123.30 474.52 L1124.30 474.73 L1125.30 474.94 L1126.30 475.13 L1127.30 475.32 L1128.30 475.48 L1129.30 475.64 L1130.30 475.79 L1131.30 475.92 L1132.30 476.05 L1133.30 476.17 L1134.30 476.28 L1135.30 476.39 L1136.30 476.50 L1137.30 476.60 L1138.30 476.70 L1139.30 476.80 L1140.30 476.89 L1141.30 476.98 L1142.30 477.07 L1143.30 477.16 L1144.30 477.24 L1145.30 477.32 L1146.30 477.39 L1147.30 477.45 L1148.30 477.50 L1149.30 477.54 L1150.30 477.56 L1151.30 477.58 L1152.30 477.57 L1153.30 477.55 L1154.30 477.51 L1155.30 477.46 L1156.30 477.38 L1157.30 477.28 L1158.30 477.17 L1159.30 477.03 L1160.30 476.86 L1161.30 476.67 L1162.30 476.44 L1163.30 476.18 L1164.30 475.89 L1165.30 475.56 L1166.30 475.18 L1167.30 474.76 L1168.30 474.30 L1169.30 473.78 L1170.30 473.22 L1171.30 472.60 L1172.30 471.94 L1173.30 471.21 L1174.30 470.44 L1175.30 469.60 L1176.30 468.71 L1177.30 467.75 L1178.30 466.73 L1179.30 465.64 L1180.30 464.49 L1181.30 463.27 L1182.30 461.99 L1183.30 460.65 L1184.30 459.25 L1185.30 457.79 L1186.30 456.28 L1187.30 454.73 L1188.30 453.13 L1189.30 451.48 L1190.30 449.80 L1191.30 448.08 L1192.30 446.33 L1193.30 444.54 L1194.30 442.74 L1195.30 440.92 L1196.30 439.08 L1197.30 437.23 L1198.30 435.39 L1199.30 433.55 L1200.30 431.72 L1201.30 429.92 L1202.30 428.13 L1203.30 426.38 L1204.30 424.66 L1205.30 422.97 L1206.30 421.32 L1207.30 419.72 L1208.30 418.16 L1209.30 416.66 L1210.30 415.20 L1211.30 413.81 L1212.30 412.47 L1213.30 411.20 L1214.30 409.99 L1215.30 408.85 L1216.30 407.77 L1217.30 406.77 L1218.30 405.83 L1219.30 404.95 L1220.30 404.13 L1221.30 403.37 L1222.30 402.66 L1223.30 402.00 L1224.30 401.38 L1225.30 400.82 L1226.30 400.29 L1227.30 399.81 L1228.30 399.38 L1229.30 398.99 L1230.30 398.65 L1231.30 398.35 L1232.30 398.09 L1233.30 397.88 L1234.30 397.71 L1235.30 397.58 L1236.30 397.50 L1237.30 397.45 L1238.30 397.45 L1239.30 397.48 L1240.30 397.56 L1241.30 397.68 L1242.30 397.85 L1243.30 398.06 L1244.30 398.31 L1245.30 398.60 L1246.30 398.95 L1247.30 399.33 L1248.30 399.77 L1249.30 400.26 L1250.30 400.79 L1251.30 401.39 L1252.30 402.03 L1253.30 402.74 L1254.30 403.51 L1255.30 404.35 L1256.30 405.25 L1257.30 406.22 L1258.30 407.25 L1259.30 408.36 L1260.30 409.54 L1261.30 410.80 L1262.30 412.14 L1263.30 413.56 L1264.30 415.07 L1265.30 416.67 L1266.30 418.37 L1267.30 420.18 L1268.30 422.09 L1269.30 424.11 L1270.30 426.24 L1271.30 428.49 L1272.30 430.84 L1273.30 433.31 L1274.30 435.89 L1275.30 438.57 L1276.30 441.35 L1277.30 444.22 L1278.30 447.17 L1279.30 450.21 L1280.30 453.30 L1281.30 456.45 L1282.30 459.63 L1283.30 462.84 L1284.30 466.06 L1285.30 469.28 L1286.30 472.47 L1287.30 475.63 L1288.30 478.73 L1289.30 481.75 L1290.30 484.69 L1291.30 487.53 L1292.30 490.26 L1293.30 492.86 L1294.30 495.32 L1295.30 497.65 L1296.30 499.83 L1297.30 501.87 L1298.30 503.77 L1299.30 505.53 L1300.30 507.16 L1301.30 508.66 L1302.30 510.04 L1303.30 511.30 L1304.30 512.46 L1305.30 513.51 L1306.30 514.47 L1307.30 515.34 L1308.30 516.14 L1309.30 516.87 L1310.30 517.53 L1311.30 518.15 L1312.30 518.72 L1313.30 519.26 L1314.30 519.77 L1315.30 520.27 L1316.30 520.74 L1317.30 521.20 L1318.30 521.66 L1319.30 522.11 L1320.30 522.55 L1321.30 522.99 L1321.80 523.21" fill="none" stroke="#3e96cc" stroke-width="2" stroke-linejoin="round"/></svg>
<div class="abs" style="left:635px;top:610px;width:13px;height:2px;background:#3e96cc;border-radius:1px"></div>
<div class="abs axis" style="left:653px;top:604px;letter-spacing:0.05px">8 Sept 2024–8 Sept 2025</div>
<svg class="abs" style="left:803px;top:609px" width="14" height="4"><circle cx="1.5" cy="2" r="1" fill="#9dbccc"/><circle cx="6.5" cy="2" r="1" fill="#9dbccc"/><circle cx="11.5" cy="2" r="1" fill="#9dbccc"/></svg>
<div class="abs axis" style="left:822px;top:604px;letter-spacing:0.05px">8 Sept 2023–7 Sept 2024</div>

<div class="card" style="left:1359px;top:249.5px;width:535px;height:389.5px"></div>
<div class="abs t13" style="left:1375px;top:268px"><span class="dot">Total sales breakdown</span></div>
<div class="abs" style="left:1381px;top:308.2px;line-height:16px;font-size:13.7px;color:#4a539c;white-space:nowrap;-webkit-text-stroke:0.15px #4a539c">Gross sales</div>
<div class="abs med" style="left:1624px;width:200px;text-align:right;top:308.2px;line-height:16px;font-size:13px;color:#303030;white-space:nowrap">$25,91,349.65</div>
<div class="abs pct green" style="left:1801px;width:100px;text-align:center;top:308.2px;line-height:16px"><svg width="8" height="8" viewBox="0 0 8 8" style="display:inline-block;vertical-align:middle;margin-right:3px;position:relative;top:-1.5px"><path d="M1.4 6.6 L5 3" stroke="currentColor" stroke-width="1.7" stroke-linecap="round"/><path d="M2.4 1.2 H6.8 V5.6 Z" fill="currentColor" stroke="currentColor" stroke-width="0.6" stroke-linejoin="round"/></svg>5%</div>
<div class="abs" style="left:1375px;top:337.2px;width:503px;height:40px;border-radius:8px;background:#f7f7f7"></div>
<div class="abs" style="left:1381px;top:349.2px;line-height:16px;font-size:13.7px;color:#4a539c;white-space:nowrap;-webkit-text-stroke:0.15px #4a539c">Discounts</div>
<div class="abs med" style="left:1624px;width:200px;text-align:right;top:349.2px;line-height:16px;font-size:13px;color:#303030;white-space:nowrap">-$50,726.71</div>
<div class="abs pct green" style="left:1801px;width:100px;text-align:center;top:349.2px;line-height:16px"><svg width="8" height="8" viewBox="0 0 8 8" style="display:inline-block;vertical-align:middle;margin-right:3px;position:relative;top:-1.5px"><path d="M1.4 6.6 L5 3" stroke="currentColor" stroke-width="1.7" stroke-linecap="round"/><path d="M2.4 1.2 H6.8 V5.6 Z" fill="currentColor" stroke="currentColor" stroke-width="0.6" stroke-linejoin="round"/></svg>8%</div>
<div class="abs" style="left:1381px;top:390.2px;line-height:16px;font-size:13.7px;color:#4a539c;white-space:nowrap;-webkit-text-stroke:0.15px #4a539c">Returns</div>
<div class="abs med" style="left:1624px;width:200px;text-align:right;top:390.2px;line-height:16px;font-size:13px;color:#303030;white-space:nowrap">-$39,236.02</div>
<div class="abs pct green" style="left:1801px;width:100px;text-align:center;top:390.2px;line-height:16px"><svg width="8" height="8" viewBox="0 0 8 8" style="display:inline-block;vertical-align:middle;margin-right:3px;position:relative;top:-1.5px"><path d="M1.4 6.6 L5 3" stroke="currentColor" stroke-width="1.7" stroke-linecap="round"/><path d="M2.4 1.2 H6.8 V5.6 Z" fill="currentColor" stroke="currentColor" stroke-width="0.6" stroke-linejoin="round"/></svg>0.8%</div>
<div class="abs" style="left:1375px;top:419.2px;width:503px;height:40px;border-radius:8px;background:#f7f7f7"></div>
<div class="abs" style="left:1381px;top:431.2px;line-height:16px;font-size:13.7px;color:#4a539c;white-space:nowrap;-webkit-text-stroke:0.15px #4a539c">Net sales</div>
<div class="abs med" style="left:1624px;width:200px;text-align:right;top:431.2px;line-height:16px;font-size:13px;color:#303030;white-space:nowrap">$25,01,386.92</div>
<div class="abs pct green" style="left:1801px;width:100px;text-align:center;top:431.2px;line-height:16px"><svg width="8" height="8" viewBox="0 0 8 8" style="display:inline-block;vertical-align:middle;margin-right:3px;position:relative;top:-1.5px"><path d="M1.4 6.6 L5 3" stroke="currentColor" stroke-width="1.7" stroke-linecap="round"/><path d="M2.4 1.2 H6.8 V5.6 Z" fill="currentColor" stroke="currentColor" stroke-width="0.6" stroke-linejoin="round"/></svg>5%</div>
<div class="abs" style="left:1381px;top:472.2px;line-height:16px;font-size:13.7px;color:#4a539c;white-space:nowrap;-webkit-text-stroke:0.15px #4a539c">Shipping charges</div>
<div class="abs med" style="left:1624px;width:200px;text-align:right;top:472.2px;line-height:16px;font-size:13px;color:#303030;white-space:nowrap">$1,37,433.73</div>
<div class="abs pct green" style="left:1801px;width:100px;text-align:center;top:472.2px;line-height:16px"><svg width="8" height="8" viewBox="0 0 8 8" style="display:inline-block;vertical-align:middle;margin-right:3px;position:relative;top:-1.5px"><path d="M1.4 6.6 L5 3" stroke="currentColor" stroke-width="1.7" stroke-linecap="round"/><path d="M2.4 1.2 H6.8 V5.6 Z" fill="currentColor" stroke="currentColor" stroke-width="0.6" stroke-linejoin="round"/></svg>5%</div>
<div class="abs" style="left:1375px;top:501.2px;width:503px;height:40px;border-radius:8px;background:#f7f7f7"></div>
<div class="abs" style="left:1381px;top:513.2px;line-height:16px;font-size:13.7px;color:#4a539c;white-space:nowrap;-webkit-text-stroke:0.15px #4a539c">Return fees</div>
<div class="abs med" style="left:1624px;width:200px;text-align:right;top:513.2px;line-height:16px;font-size:13px;color:#303030;white-space:nowrap">$0.00</div>
<div class="abs" style="left:1846px;top:520.7px;width:11px;height:1.5px;background:#8a8a8a"></div>
<div class="abs" style="left:1381px;top:554.2px;line-height:16px;font-size:13.7px;color:#4a539c;white-space:nowrap;-webkit-text-stroke:0.15px #4a539c">Taxes</div>
<div class="abs med" style="left:1624px;width:200px;text-align:right;top:554.2px;line-height:16px;font-size:13px;color:#303030;white-space:nowrap">$3,401.85</div>
<div class="abs pct gray2" style="left:1801px;width:100px;text-align:center;top:554.2px;line-height:16px"><svg width="8" height="8" viewBox="0 0 8 8" style="display:inline-block;vertical-align:middle;margin-right:3px;position:relative;top:-1.5px"><path d="M1.4 6.6 L5 3" stroke="currentColor" stroke-width="1.7" stroke-linecap="round"/><path d="M2.4 1.2 H6.8 V5.6 Z" fill="currentColor" stroke="currentColor" stroke-width="0.6" stroke-linejoin="round"/></svg>37%</div>
<div class="abs" style="left:1375px;top:583.2px;width:503px;height:40px;border-radius:8px;background:#f7f7f7"></div>
<div class="abs" style="left:1381px;top:595.2px;line-height:16px;font-size:13.7px;color:#4a539c;white-space:nowrap;-webkit-text-stroke:0.15px #4a539c">Total sales</div>
<div class="abs med" style="left:1624px;width:200px;text-align:right;top:595.2px;line-height:16px;font-size:13px;color:#303030;white-space:nowrap">$26,42,222.50</div>
<div class="abs pct green" style="left:1801px;width:100px;text-align:center;top:595.2px;line-height:16px"><svg width="8" height="8" viewBox="0 0 8 8" style="display:inline-block;vertical-align:middle;margin-right:3px;position:relative;top:-1.5px"><path d="M1.4 6.6 L5 3" stroke="currentColor" stroke-width="1.7" stroke-linecap="round"/><path d="M2.4 1.2 H6.8 V5.6 Z" fill="currentColor" stroke="currentColor" stroke-width="0.6" stroke-linejoin="round"/></svg>5%</div>

<div class="card" style="left:256px;top:654.5px;width:535px;height:255px"></div>
<div class="abs t13" style="left:272px;top:673px"><span class="dot">Total sales by sales channel</span></div>
<svg class="abs" style="left:0;top:0" width="1919" height="949" viewBox="0 0 1919 949"><path d="M388.23 708.54 A87 87 0 0 1 395.50 881.92 L393.55 865.04 A70 70 0 0 0 387.70 725.53 Z" fill="#38aaea" stroke="#38aaea" stroke-width="0.8" stroke-linejoin="round"/><path d="M392.17 882.24 A87 87 0 0 1 362.69 711.54 L367.15 727.95 A70 70 0 0 0 390.87 865.29 Z" fill="#7a27df" stroke="#7a27df" stroke-width="0.8" stroke-linejoin="round"/><path d="M366.82 710.53 A87 87 0 0 1 369.79 709.93 L372.86 726.65 A70 70 0 0 0 370.47 727.13 Z" fill="#6b7be3" stroke="#6b7be3" stroke-width="0.8" stroke-linejoin="round"/><path d="M372.79 709.43 A87 87 0 0 1 375.80 709.04 L377.70 725.94 A70 70 0 0 0 375.27 726.25 Z" fill="#d53ea9" stroke="#d53ea9" stroke-width="0.8" stroke-linejoin="round"/><path d="M378.52 708.78 A87 87 0 0 1 380.64 708.64 L381.59 725.61 A70 70 0 0 0 379.89 725.73 Z" fill="#2a9c8c" stroke="#2a9c8c" stroke-width="0.8" stroke-linejoin="round"/><path d="M383.22 708.53 A87 87 0 0 1 384.74 708.50 L384.89 725.50 A70 70 0 0 0 383.67 725.52 Z" fill="#6a3d9a" stroke="#6a3d9a" stroke-width="0.8" stroke-linejoin="round"/></svg>
<div class="abs med" style="left:305px;width:161px;text-align:center;top:775px;line-height:24px;font-size:21.5px;color:#303030">$26.4L</div>
<div class="abs pct green" style="left:305px;width:161px;text-align:center;top:801px;line-height:16px"><svg width="8" height="8" viewBox="0 0 8 8" style="display:inline-block;vertical-align:middle;margin-right:3px;position:relative;top:-1.5px"><path d="M1.4 6.6 L5 3" stroke="currentColor" stroke-width="1.7" stroke-linecap="round"/><path d="M2.4 1.2 H6.8 V5.6 Z" fill="currentColor" stroke="currentColor" stroke-width="0.6" stroke-linejoin="round"/></svg>5%</div>
<div class="abs" style="left:504px;top:735px;width:12px;height:12px;border-radius:2px;background:#38aaea"></div>
<div class="abs" style="left:519px;top:733px;line-height:16px;font-size:12.6px;color:#616161;white-space:nowrap">Online Store</div>
<div class="abs" style="left:615px;width:100px;text-align:right;top:733px;line-height:16px;font-size:12.2px;color:#616161;white-space:nowrap">$13.2L</div>
<div class="abs pct" style="left:719px;top:734px;line-height:16px;color:#4a4a4a"><svg width="8" height="8" viewBox="0 0 8 8" style="display:inline-block;vertical-align:middle;margin-right:3px;position:relative;top:-1px"><path d="M1.4 1.4 L5 5" stroke="currentColor" stroke-width="1.7" stroke-linecap="round"/><path d="M2.4 6.8 H6.8 V2.4 Z" fill="currentColor" stroke="currentColor" stroke-width="0.6" stroke-linejoin="round"/></svg>3%</div>
<div class="abs" style="left:504px;top:763px;width:12px;height:12px;border-radius:2px;background:#7a27df"></div>
<div class="abs" style="left:519px;top:761px;line-height:16px;font-size:12.6px;color:#616161;white-space:nowrap">Draft Orders</div>
<div class="abs" style="left:615px;width:100px;text-align:right;top:761px;line-height:16px;font-size:12.2px;color:#616161;white-space:nowrap">$13L</div>
<div class="abs pct green" style="left:719px;top:762px;line-height:16px"><svg width="8" height="8" viewBox="0 0 8 8" style="display:inline-block;vertical-align:middle;margin-right:3px;position:relative;top:-1.5px"><path d="M1.4 6.6 L5 3" stroke="currentColor" stroke-width="1.7" stroke-linecap="round"/><path d="M2.4 1.2 H6.8 V5.6 Z" fill="currentColor" stroke="currentColor" stroke-width="0.6" stroke-linejoin="round"/></svg>14%</div>
<div class="abs" style="left:504px;top:791px;width:12px;height:12px;border-radius:2px;background:#6b7be3"></div>
<div class="abs" style="left:519px;top:789px;line-height:16px;font-size:12.6px;color:#616161;white-space:nowrap">Shopify Mobile for iPh...</div>
<div class="abs" style="left:615px;width:100px;text-align:right;top:789px;line-height:16px;font-size:12.2px;color:#616161;white-space:nowrap">$9T</div>
<div class="abs" style="left:720px;top:796.5px;width:11px;height:1.5px;background:#616161"></div>
<div class="abs" style="left:504px;top:819px;width:12px;height:12px;border-radius:2px;background:#d53ea9"></div>
<div class="abs" style="left:519px;top:817px;line-height:16px;font-size:12.6px;color:#616161;white-space:nowrap">Bundler</div>
<div class="abs" style="left:615px;width:100px;text-align:right;top:817px;line-height:16px;font-size:12.2px;color:#616161;white-space:nowrap">$7.4T</div>
<div class="abs" style="left:720px;top:824.5px;width:11px;height:1.5px;background:#616161"></div>
<div class="abs" style="left:509px;top:852px;line-height:16px;font-size:11.6px;color:#616161;white-space:nowrap">+2 more</div>

<div class="card" style="left:807px;top:654.5px;width:536px;height:255px"></div>
<div class="abs t13" style="left:823px;top:673px"><span class="dot">Average order value over time</span></div>
<div class="abs" style="left:823px;top:698px;line-height:24px;white-space:nowrap"><span class="med" style="font-size:20px;color:#303030">$1,281.61</span><span class="pct green" style="margin-left:7px;position:relative;top:-1px"><svg width="8" height="8" viewBox="0 0 8 8" style="display:inline-block;vertical-align:middle;margin-right:3px;position:relative;top:-1.5px"><path d="M1.4 6.6 L5 3" stroke="currentColor" stroke-width="1.7" stroke-linecap="round"/><path d="M2.4 1.2 H6.8 V5.6 Z" fill="currentColor" stroke="currentColor" stroke-width="0.6" stroke-linejoin="round"/></svg>6%</span></div>
<div class="abs axis" style="left:825px;top:735.7px">$5T</div>
<div class="abs axis" style="left:825px;top:814.8px">$0</div>
<div class="abs axis" style="left:819.0px;width:100px;text-align:center;top:837px">Sept 2024</div>
<div class="abs axis" style="left:894.4px;width:100px;text-align:center;top:837px">Nov 2024</div>
<div class="abs axis" style="left:969.8px;width:100px;text-align:center;top:837px">Jan 2025</div>
<div class="abs axis" style="left:1045.2px;width:100px;text-align:center;top:837px">Mar 2025</div>
<div class="abs axis" style="left:1120.6px;width:100px;text-align:center;top:837px">May 2025</div>
<div class="abs axis" style="left:1196.0px;width:100px;text-align:center;top:837px">Jul 2025</div>
<svg class="abs" style="left:0;top:0" width="1919" height="949" viewBox="0 0 1919 949"><defs><linearGradient id="bg2" x1="0" y1="0" x2="0" y2="1"><stop offset="0" stop-color="#e6f2fb" stop-opacity=".8"/><stop offset="1" stop-color="#ffffff" stop-opacity="0.2"/></linearGradient></defs><rect x="869" y="743.1" width="453" height="1" fill="#ebebeb"/><rect x="869" y="822.3" width="453" height="1" fill="#ebebeb"/><path d="M869.00 805.00 L870.00 804.85 L871.00 804.70 L872.00 804.56 L873.00 804.41 L874.00 804.26 L875.00 804.11 L876.00 803.96 L877.00 803.81 L878.00 803.67 L879.00 803.52 L880.00 803.37 L881.00 803.22 L882.00 803.07 L883.00 802.93 L884.00 802.78 L885.00 802.63 L886.00 802.48 L887.00 802.33 L888.00 802.19 L889.00 802.04 L890.00 801.90 L891.00 801.75 L892.00 801.62 L893.00 801.48 L894.00 801.35 L895.00 801.23 L896.00 801.11 L897.00 801.00 L898.00 800.90 L899.00 800.81 L900.00 800.72 L901.00 800.64 L902.00 800.56 L903.00 800.49 L904.00 800.43 L905.00 800.38 L906.00 800.35 L907.00 800.34 L908.00 800.34 L909.00 800.37 L910.00 800.43 L911.00 800.50 L912.00 800.60 L913.00 800.71 L914.00 800.84 L915.00 800.98 L916.00 801.13 L917.00 801.28 L918.00 801.43 L919.00 801.59 L920.00 801.75 L921.00 801.91 L922.00 802.07 L923.00 802.22 L924.00 802.38 L925.00 802.53 L926.00 802.68 L927.00 802.83 L928.00 802.96 L929.00 803.09 L930.00 803.21 L931.00 803.32 L932.00 803.41 L933.00 803.50 L934.00 803.57 L935.00 803.64 L936.00 803.70 L937.00 803.75 L938.00 803.80 L939.00 803.84 L940.00 803.89 L941.00 803.93 L942.00 803.98 L943.00 804.02 L944.00 804.06 L945.00 804.11 L946.00 804.15 L947.00 804.19 L948.00 804.23 L949.00 804.26 L950.00 804.30 L951.00 804.32 L952.00 804.34 L953.00 804.35 L954.00 804.35 L955.00 804.34 L956.00 804.33 L957.00 804.30 L958.00 804.27 L959.00 804.23 L960.00 804.19 L961.00 804.14 L962.00 804.10 L963.00 804.05 L964.00 804.00 L965.00 803.95 L966.00 803.90 L967.00 803.85 L968.00 803.80 L969.00 803.75 L970.00 803.70 L971.00 803.65 L972.00 803.60 L973.00 803.55 L974.00 803.50 L975.00 803.45 L976.00 803.40 L977.00 803.35 L978.00 803.30 L979.00 803.25 L980.00 803.20 L981.00 803.15 L982.00 803.10 L983.00 803.05 L984.00 803.00 L985.00 802.95 L986.00 802.89 L987.00 802.84 L988.00 802.78 L989.00 802.72 L990.00 802.66 L991.00 802.59 L992.00 802.52 L993.00 802.44 L994.00 802.36 L995.00 802.27 L996.00 802.18 L997.00 802.09 L998.00 801.99 L999.00 801.90 L1000.00 801.80 L1001.00 801.70 L1002.00 801.60 L1003.00 801.50 L1004.00 801.40 L1005.00 801.30 L1006.00 801.20 L1007.00 801.10 L1008.00 801.00 L1009.00 800.90 L1010.00 800.80 L1011.00 800.70 L1012.00 800.60 L1013.00 800.51 L1014.00 800.42 L1015.00 800.33 L1016.00 800.26 L1017.00 800.19 L1018.00 800.15 L1019.00 800.13 L1020.00 800.13 L1021.00 800.16 L1022.00 800.22 L1023.00 800.31 L1024.00 800.42 L1025.00 800.56 L1026.00 800.71 L1027.00 800.88 L1028.00 801.05 L1029.00 801.23 L1030.00 801.42 L1031.00 801.61 L1032.00 801.80 L1033.00 801.99 L1034.00 802.18 L1035.00 802.37 L1036.00 802.56 L1037.00 802.75 L1038.00 802.94 L1039.00 803.13 L1040.00 803.32 L1041.00 803.51 L1042.00 803.70 L1043.00 803.89 L1044.00 804.08 L1045.00 804.27 L1046.00 804.45 L1047.00 804.63 L1048.00 804.80 L1049.00 804.96 L1050.00 805.11 L1051.00 805.24 L1052.00 805.34 L1053.00 805.43 L1054.00 805.49 L1055.00 805.53 L1056.00 805.54 L1057.00 805.54 L1058.00 805.53 L1059.00 805.50 L1060.00 805.47 L1061.00 805.43 L1062.00 805.39 L1063.00 805.35 L1064.00 805.30 L1065.00 805.26 L1066.00 805.21 L1067.00 805.17 L1068.00 805.12 L1069.00 805.08 L1070.00 805.03 L1071.00 804.99 L1072.00 804.94 L1073.00 804.90 L1074.00 804.85 L1075.00 804.80 L1076.00 804.76 L1077.00 804.71 L1078.00 804.67 L1079.00 804.62 L1080.00 804.58 L1081.00 804.53 L1082.00 804.49 L1083.00 804.44 L1084.00 804.40 L1085.00 804.35 L1086.00 804.31 L1087.00 804.26 L1088.00 804.22 L1089.00 804.18 L1090.00 804.14 L1091.00 804.10 L1092.00 804.06 L1093.00 804.03 L1094.00 804.00 L1095.00 803.98 L1096.00 803.97 L1097.00 803.95 L1098.00 803.95 L1099.00 803.94 L1100.00 803.94 L1101.00 803.95 L1102.00 803.95 L1103.00 803.96 L1104.00 803.96 L1105.00 803.97 L1106.00 803.97 L1107.00 803.98 L1108.00 803.99 L1109.00 803.99 L1110.00 804.00 L1111.00 804.01 L1112.00 804.01 L1113.00 804.02 L1114.00 804.03 L1115.00 804.03 L1116.00 804.04 L1117.00 804.05 L1118.00 804.06 L1119.00 804.06 L1120.00 804.07 L1121.00 804.08 L1122.00 804.08 L1123.00 804.09 L1124.00 804.10 L1125.00 804.10 L1126.00 804.11 L1127.00 804.12 L1128.00 804.12 L1129.00 804.13 L1130.00 804.14 L1131.00 804.14 L1132.00 804.15 L1133.00 804.15 L1134.00 804.15 L1135.00 804.14 L1136.00 804.13 L1137.00 804.12 L1138.00 804.09 L1139.00 804.05 L1140.00 804.01 L1141.00 803.95 L1142.00 803.88 L1143.00 803.81 L1144.00 803.72 L1145.00 803.63 L1146.00 803.54 L1147.00 803.45 L1148.00 803.35 L1149.00 803.25 L1150.00 803.15 L1151.00 803.05 L1152.00 802.95 L1153.00 802.85 L1154.00 802.75 L1155.00 802.65 L1156.00 802.55 L1157.00 802.45 L1158.00 802.35 L1159.00 802.25 L1160.00 802.15 L1161.00 802.05 L1162.00 801.95 L1163.00 801.85 L1164.00 801.76 L1165.00 801.67 L1166.00 801.58 L1167.00 801.51 L1168.00 801.44 L1169.00 801.39 L1170.00 801.36 L1171.00 801.36 L1172.00 801.37 L1173.00 801.41 L1174.00 801.46 L1175.00 801.54 L1176.00 801.63 L1177.00 801.73 L1178.00 801.85 L1179.00 801.97 L1180.00 802.09 L1181.00 802.21 L1182.00 802.34 L1183.00 802.47 L1184.00 802.59 L1185.00 802.72 L1186.00 802.85 L1187.00 802.98 L1188.00 803.10 L1189.00 803.23 L1190.00 803.36 L1191.00 803.49 L1192.00 803.61 L1193.00 803.74 L1194.00 803.87 L1195.00 804.00 L1196.00 804.12 L1197.00 804.25 L1198.00 804.38 L1199.00 804.50 L1200.00 804.62 L1201.00 804.74 L1202.00 804.85 L1203.00 804.95 L1204.00 805.04 L1205.00 805.12 L1206.00 805.18 L1207.00 805.22 L1208.00 805.25 L1209.00 805.26 L1210.00 805.25 L1211.00 805.23 L1212.00 805.20 L1213.00 805.16 L1214.00 805.12 L1215.00 805.07 L1216.00 805.02 L1217.00 804.97 L1218.00 804.92 L1219.00 804.86 L1220.00 804.81 L1221.00 804.76 L1222.00 804.71 L1223.00 804.66 L1224.00 804.60 L1225.00 804.55 L1226.00 804.50 L1227.00 804.45 L1228.00 804.40 L1229.00 804.34 L1230.00 804.29 L1231.00 804.24 L1232.00 804.19 L1233.00 804.14 L1234.00 804.08 L1235.00 804.03 L1236.00 803.98 L1237.00 803.93 L1238.00 803.88 L1239.00 803.82 L1240.00 803.77 L1241.00 803.72 L1242.00 803.67 L1243.00 803.61 L1244.00 803.56 L1245.00 803.51 L1246.00 803.45 L1247.00 803.40 L1248.00 803.33 L1249.00 803.26 L1250.00 803.18 L1251.00 803.08 L1252.00 802.95 L1253.00 802.80 L1254.00 802.63 L1255.00 802.41 L1256.00 802.16 L1257.00 801.89 L1258.00 801.58 L1259.00 801.24 L1260.00 800.89 L1261.00 800.52 L1262.00 800.14 L1263.00 799.76 L1264.00 799.37 L1265.00 798.98 L1266.00 798.60 L1267.00 798.21 L1268.00 797.83 L1269.00 797.45 L1270.00 797.08 L1271.00 796.72 L1272.00 796.35 L1273.00 796.00 L1274.00 795.65 L1275.00 795.30 L1276.00 794.96 L1277.00 794.64 L1278.00 794.32 L1279.00 794.02 L1280.00 793.75 L1281.00 793.51 L1282.00 793.31 L1283.00 793.15 L1284.00 793.04 L1285.00 792.98 L1286.00 792.97 L1287.00 792.99 L1288.00 793.05 L1289.00 793.14 L1290.00 793.25 L1291.00 793.37 L1292.00 793.51 L1293.00 793.65 L1294.00 793.80 L1295.00 793.95 L1296.00 794.11 L1297.00 794.28 L1298.00 794.45 L1299.00 794.64 L1300.00 794.84 L1301.00 795.05 L1302.00 795.27 L1303.00 795.49 L1304.00 795.73 L1305.00 795.97 L1306.00 796.22 L1307.00 796.47 L1308.00 796.72 L1309.00 796.98 L1310.00 797.23 L1311.00 797.49 L1312.00 797.74 L1313.00 798.00 L1314.00 798.26 L1315.00 798.51 L1316.00 798.77 L1317.00 799.02 L1318.00 799.28 L1319.00 799.53 L1320.00 799.79 L1321.00 800.04 L1322.00 800.30 L1322 822.8 L869 822.8 Z" fill="url(#bg2)"/><path d="M869.00 802.00 L870.00 802.19 L871.00 802.38 L872.00 802.57 L873.00 802.76 L874.00 802.95 L875.00 803.14 L876.00 803.33 L877.00 803.52 L878.00 803.71 L879.00 803.90 L880.00 804.09 L881.00 804.28 L882.00 804.47 L883.00 804.66 L884.00 804.85 L885.00 805.03 L886.00 805.22 L887.00 805.40 L888.00 805.58 L889.00 805.76 L890.00 805.94 L891.00 806.11 L892.00 806.28 L893.00 806.45 L894.00 806.61 L895.00 806.78 L896.00 806.94 L897.00 807.10 L898.00 807.25 L899.00 807.40 L900.00 807.55 L901.00 807.69 L902.00 807.82 L903.00 807.94 L904.00 808.04 L905.00 808.11 L906.00 808.17 L907.00 808.19 L908.00 808.19 L909.00 808.14 L910.00 808.07 L911.00 807.96 L912.00 807.82 L913.00 807.65 L914.00 807.45 L915.00 807.24 L916.00 807.00 L917.00 806.76 L918.00 806.50 L919.00 806.24 L920.00 805.97 L921.00 805.70 L922.00 805.43 L923.00 805.16 L924.00 804.89 L925.00 804.62 L926.00 804.36 L927.00 804.10 L928.00 803.85 L929.00 803.61 L930.00 803.38 L931.00 803.17 L932.00 802.98 L933.00 802.81 L934.00 802.66 L935.00 802.54 L936.00 802.44 L937.00 802.36 L938.00 802.30 L939.00 802.26 L940.00 802.24 L941.00 802.23 L942.00 802.24 L943.00 802.25 L944.00 802.26 L945.00 802.28 L946.00 802.30 L947.00 802.33 L948.00 802.35 L949.00 802.38 L950.00 802.40 L951.00 802.43 L952.00 802.46 L953.00 802.48 L954.00 802.51 L955.00 802.53 L956.00 802.56 L957.00 802.59 L958.00 802.61 L959.00 802.64 L960.00 802.67 L961.00 802.69 L962.00 802.72 L963.00 802.74 L964.00 802.77 L965.00 802.80 L966.00 802.82 L967.00 802.85 L968.00 802.87 L969.00 802.90 L970.00 802.93 L971.00 802.95 L972.00 802.98 L973.00 803.00 L974.00 803.03 L975.00 803.06 L976.00 803.08 L977.00 803.11 L978.00 803.13 L979.00 803.16 L980.00 803.18 L981.00 803.21 L982.00 803.23 L983.00 803.24 L984.00 803.25 L985.00 803.25 L986.00 803.24 L987.00 803.22 L988.00 803.17 L989.00 803.11 L990.00 803.01 L991.00 802.88 L992.00 802.72 L993.00 802.52 L994.00 802.26 L995.00 801.96 L996.00 801.61 L997.00 801.19 L998.00 800.70 L999.00 800.15 L1000.00 799.52 L1001.00 798.82 L1002.00 798.05 L1003.00 797.21 L1004.00 796.31 L1005.00 795.37 L1006.00 794.40 L1007.00 793.42 L1008.00 792.46 L1009.00 791.52 L1010.00 790.63 L1011.00 789.80 L1012.00 789.03 L1013.00 788.35 L1014.00 787.74 L1015.00 787.22 L1016.00 786.79 L1017.00 786.45 L1018.00 786.21 L1019.00 786.05 L1020.00 785.98 L1021.00 786.00 L1022.00 786.10 L1023.00 786.30 L1024.00 786.57 L1025.00 786.92 L1026.00 787.36 L1027.00 787.87 L1028.00 788.47 L1029.00 789.13 L1030.00 789.87 L1031.00 790.66 L1032.00 791.51 L1033.00 792.40 L1034.00 793.31 L1035.00 794.23 L1036.00 795.15 L1037.00 796.05 L1038.00 796.92 L1039.00 797.75 L1040.00 798.53 L1041.00 799.25 L1042.00 799.91 L1043.00 800.52 L1044.00 801.07 L1045.00 801.58 L1046.00 802.04 L1047.00 802.47 L1048.00 802.85 L1049.00 803.20 L1050.00 803.52 L1051.00 803.80 L1052.00 804.06 L1053.00 804.28 L1054.00 804.47 L1055.00 804.63 L1056.00 804.76 L1057.00 804.87 L1058.00 804.96 L1059.00 805.03 L1060.00 805.08 L1061.00 805.13 L1062.00 805.16 L1063.00 805.20 L1064.00 805.22 L1065.00 805.25 L1066.00 805.27 L1067.00 805.29 L1068.00 805.31 L1069.00 805.33 L1070.00 805.35 L1071.00 805.37 L1072.00 805.40 L1073.00 805.42 L1074.00 805.44 L1075.00 805.46 L1076.00 805.48 L1077.00 805.50 L1078.00 805.52 L1079.00 805.54 L1080.00 805.56 L1081.00 805.58 L1082.00 805.60 L1083.00 805.62 L1084.00 805.65 L1085.00 805.67 L1086.00 805.69 L1087.00 805.71 L1088.00 805.73 L1089.00 805.75 L1090.00 805.77 L1091.00 805.79 L1092.00 805.81 L1093.00 805.83 L1094.00 805.85 L1095.00 805.87 L1096.00 805.89 L1097.00 805.92 L1098.00 805.94 L1099.00 805.96 L1100.00 805.98 L1101.00 806.00 L1102.00 806.02 L1103.00 806.04 L1104.00 806.06 L1105.00 806.08 L1106.00 806.10 L1107.00 806.12 L1108.00 806.14 L1109.00 806.17 L1110.00 806.19 L1111.00 806.21 L1112.00 806.23 L1113.00 806.25 L1114.00 806.27 L1115.00 806.29 L1116.00 806.31 L1117.00 806.33 L1118.00 806.35 L1119.00 806.37 L1120.00 806.39 L1121.00 806.42 L1122.00 806.44 L1123.00 806.46 L1124.00 806.48 L1125.00 806.50 L1126.00 806.52 L1127.00 806.54 L1128.00 806.56 L1129.00 806.58 L1130.00 806.60 L1131.00 806.61 L1132.00 806.63 L1133.00 806.64 L1134.00 806.65 L1135.00 806.65 L1136.00 806.65 L1137.00 806.64 L1138.00 806.63 L1139.00 806.60 L1140.00 806.57 L1141.00 806.53 L1142.00 806.48 L1143.00 806.42 L1144.00 806.35 L1145.00 806.28 L1146.00 806.21 L1147.00 806.13 L1148.00 806.05 L1149.00 805.96 L1150.00 805.88 L1151.00 805.79 L1152.00 805.71 L1153.00 805.62 L1154.00 805.53 L1155.00 805.44 L1156.00 805.36 L1157.00 805.27 L1158.00 805.18 L1159.00 805.09 L1160.00 805.01 L1161.00 804.92 L1162.00 804.84 L1163.00 804.75 L1164.00 804.67 L1165.00 804.59 L1166.00 804.52 L1167.00 804.45 L1168.00 804.38 L1169.00 804.33 L1170.00 804.28 L1171.00 804.24 L1172.00 804.21 L1173.00 804.18 L1174.00 804.17 L1175.00 804.16 L1176.00 804.16 L1177.00 804.17 L1178.00 804.18 L1179.00 804.20 L1180.00 804.21 L1181.00 804.23 L1182.00 804.25 L1183.00 804.28 L1184.00 804.30 L1185.00 804.32 L1186.00 804.35 L1187.00 804.37 L1188.00 804.40 L1189.00 804.42 L1190.00 804.44 L1191.00 804.47 L1192.00 804.49 L1193.00 804.52 L1194.00 804.54 L1195.00 804.56 L1196.00 804.59 L1197.00 804.61 L1198.00 804.64 L1199.00 804.66 L1200.00 804.68 L1201.00 804.71 L1202.00 804.73 L1203.00 804.76 L1204.00 804.78 L1205.00 804.80 L1206.00 804.83 L1207.00 804.85 L1208.00 804.88 L1209.00 804.90 L1210.00 804.92 L1211.00 804.95 L1212.00 804.97 L1213.00 805.00 L1214.00 805.02 L1215.00 805.04 L1216.00 805.07 L1217.00 805.09 L1218.00 805.12 L1219.00 805.14 L1220.00 805.16 L1221.00 805.19 L1222.00 805.21 L1223.00 805.24 L1224.00 805.26 L1225.00 805.28 L1226.00 805.31 L1227.00 805.33 L1228.00 805.36 L1229.00 805.38 L1230.00 805.40 L1231.00 805.43 L1232.00 805.45 L1233.00 805.48 L1234.00 805.50 L1235.00 805.52 L1236.00 805.55 L1237.00 805.57 L1238.00 805.60 L1239.00 805.62 L1240.00 805.64 L1241.00 805.67 L1242.00 805.69 L1243.00 805.72 L1244.00 805.74 L1245.00 805.76 L1246.00 805.78 L1247.00 805.80 L1248.00 805.82 L1249.00 805.84 L1250.00 805.85 L1251.00 805.85 L1252.00 805.86 L1253.00 805.85 L1254.00 805.84 L1255.00 805.83 L1256.00 805.80 L1257.00 805.77 L1258.00 805.73 L1259.00 805.69 L1260.00 805.64 L1261.00 805.59 L1262.00 805.54 L1263.00 805.48 L1264.00 805.42 L1265.00 805.36 L1266.00 805.30 L1267.00 805.24 L1268.00 805.18 L1269.00 805.12 L1270.00 805.06 L1271.00 804.99 L1272.00 804.93 L1273.00 804.87 L1274.00 804.81 L1275.00 804.75 L1276.00 804.69 L1277.00 804.63 L1278.00 804.57 L1279.00 804.52 L1280.00 804.47 L1281.00 804.43 L1282.00 804.39 L1283.00 804.37 L1284.00 804.36 L1285.00 804.36 L1286.00 804.37 L1287.00 804.41 L1288.00 804.45 L1289.00 804.52 L1290.00 804.60 L1291.00 804.69 L1292.00 804.80 L1293.00 804.91 L1294.00 805.04 L1295.00 805.16 L1296.00 805.30 L1297.00 805.44 L1298.00 805.58 L1299.00 805.72 L1300.00 805.86 L1301.00 806.00 L1302.00 806.14 L1303.00 806.29 L1304.00 806.43 L1305.00 806.57 L1306.00 806.71 L1307.00 806.86 L1308.00 807.00 L1309.00 807.14 L1310.00 807.29 L1311.00 807.43 L1312.00 807.57 L1313.00 807.71 L1314.00 807.86 L1315.00 808.00 L1316.00 808.14 L1317.00 808.29 L1318.00 808.43 L1319.00 808.57 L1320.00 808.71 L1321.00 808.86 L1322.00 809.00" fill="none" stroke="#8db5c9" stroke-width="2" stroke-dasharray="0.1 3.8" stroke-linecap="round"/><path d="M869.00 805.00 L870.00 804.85 L871.00 804.70 L872.00 804.56 L873.00 804.41 L874.00 804.26 L875.00 804.11 L876.00 803.96 L877.00 803.81 L878.00 803.67 L879.00 803.52 L880.00 803.37 L881.00 803.22 L882.00 803.07 L883.00 802.93 L884.00 802.78 L885.00 802.63 L886.00 802.48 L887.00 802.33 L888.00 802.19 L889.00 802.04 L890.00 801.90 L891.00 801.75 L892.00 801.62 L893.00 801.48 L894.00 801.35 L895.00 801.23 L896.00 801.11 L897.00 801.00 L898.00 800.90 L899.00 800.81 L900.00 800.72 L901.00 800.64 L902.00 800.56 L903.00 800.49 L904.00 800.43 L905.00 800.38 L906.00 800.35 L907.00 800.34 L908.00 800.34 L909.00 800.37 L910.00 800.43 L911.00 800.50 L912.00 800.60 L913.00 800.71 L914.00 800.84 L915.00 800.98 L916.00 801.13 L917.00 801.28 L918.00 801.43 L919.00 801.59 L920.00 801.75 L921.00 801.91 L922.00 802.07 L923.00 802.22 L924.00 802.38 L925.00 802.53 L926.00 802.68 L927.00 802.83 L928.00 802.96 L929.00 803.09 L930.00 803.21 L931.00 803.32 L932.00 803.41 L933.00 803.50 L934.00 803.57 L935.00 803.64 L936.00 803.70 L937.00 803.75 L938.00 803.80 L939.00 803.84 L940.00 803.89 L941.00 803.93 L942.00 803.98 L943.00 804.02 L944.00 804.06 L945.00 804.11 L946.00 804.15 L947.00 804.19 L948.00 804.23 L949.00 804.26 L950.00 804.30 L951.00 804.32 L952.00 804.34 L953.00 804.35 L954.00 804.35 L955.00 804.34 L956.00 804.33 L957.00 804.30 L958.00 804.27 L959.00 804.23 L960.00 804.19 L961.00 804.14 L962.00 804.10 L963.00 804.05 L964.00 804.00 L965.00 803.95 L966.00 803.90 L967.00 803.85 L968.00 803.80 L969.00 803.75 L970.00 803.70 L971.00 803.65 L972.00 803.60 L973.00 803.55 L974.00 803.50 L975.00 803.45 L976.00 803.40 L977.00 803.35 L978.00 803.30 L979.00 803.25 L980.00 803.20 L981.00 803.15 L982.00 803.10 L983.00 803.05 L984.00 803.00 L985.00 802.95 L986.00 802.89 L987.00 802.84 L988.00 802.78 L989.00 802.72 L990.00 802.66 L991.00 802.59 L992.00 802.52 L993.00 802.44 L994.00 802.36 L995.00 802.27 L996.00 802.18 L997.00 802.09 L998.00 801.99 L999.00 801.90 L1000.00 801.80 L1001.00 801.70 L1002.00 801.60 L1003.00 801.50 L1004.00 801.40 L1005.00 801.30 L1006.00 801.20 L1007.00 801.10 L1008.00 801.00 L1009.00 800.90 L1010.00 800.80 L1011.00 800.70 L1012.00 800.60 L1013.00 800.51 L1014.00 800.42 L1015.00 800.33 L1016.00 800.26 L1017.00 800.19 L1018.00 800.15 L1019.00 800.13 L1020.00 800.13 L1021.00 800.16 L1022.00 800.22 L1023.00 800.31 L1024.00 800.42 L1025.00 800.56 L1026.00 800.71 L1027.00 800.88 L1028.00 801.05 L1029.00 801.23 L1030.00 801.42 L1031.00 801.61 L1032.00 801.80 L1033.00 801.99 L1034.00 802.18 L1035.00 802.37 L1036.00 802.56 L1037.00 802.75 L1038.00 802.94 L1039.00 803.13 L1040.00 803.32 L1041.00 803.51 L1042.00 803.70 L1043.00 803.89 L1044.00 804.08 L1045.00 804.27 L1046.00 804.45 L1047.00 804.63 L1048.00 804.80 L1049.00 804.96 L1050.00 805.11 L1051.00 805.24 L1052.00 805.34 L1053.00 805.43 L1054.00 805.49 L1055.00 805.53 L1056.00 805.54 L1057.00 805.54 L1058.00 805.53 L1059.00 805.50 L1060.00 805.47 L1061.00 805.43 L1062.00 805.39 L1063.00 805.35 L1064.00 805.30 L1065.00 805.26 L1066.00 805.21 L1067.00 805.17 L1068.00 805.12 L1069.00 805.08 L1070.00 805.03 L1071.00 804.99 L1072.00 804.94 L1073.00 804.90 L1074.00 804.85 L1075.00 804.80 L1076.00 804.76 L1077.00 804.71 L1078.00 804.67 L1079.00 804.62 L1080.00 804.58 L1081.00 804.53 L1082.00 804.49 L1083.00 804.44 L1084.00 804.40 L1085.00 804.35 L1086.00 804.31 L1087.00 804.26 L1088.00 804.22 L1089.00 804.18 L1090.00 804.14 L1091.00 804.10 L1092.00 804.06 L1093.00 804.03 L1094.00 804.00 L1095.00 803.98 L1096.00 803.97 L1097.00 803.95 L1098.00 803.95 L1099.00 803.94 L1100.00 803.94 L1101.00 803.95 L1102.00 803.95 L1103.00 803.96 L1104.00 803.96 L1105.00 803.97 L1106.00 803.97 L1107.00 803.98 L1108.00 803.99 L1109.00 803.99 L1110.00 804.00 L1111.00 804.01 L1112.00 804.01 L1113.00 804.02 L1114.00 804.03 L1115.00 804.03 L1116.00 804.04 L1117.00 804.05 L1118.00 804.06 L1119.00 804.06 L1120.00 804.07 L1121.00 804.08 L1122.00 804.08 L1123.00 804.09 L1124.00 804.10 L1125.00 804.10 L1126.00 804.11 L1127.00 804.12 L1128.00 804.12 L1129.00 804.13 L1130.00 804.14 L1131.00 804.14 L1132.00 804.15 L1133.00 804.15 L1134.00 804.15 L1135.00 804.14 L1136.00 804.13 L1137.00 804.12 L1138.00 804.09 L1139.00 804.05 L1140.00 804.01 L1141.00 803.95 L1142.00 803.88 L1143.00 803.81 L1144.00 803.72 L1145.00 803.63 L1146.00 803.54 L1147.00 803.45 L1148.00 803.35 L1149.00 803.25 L1150.00 803.15 L1151.00 803.05 L1152.00 802.95 L1153.00 802.85 L1154.00 802.75 L1155.00 802.65 L1156.00 802.55 L1157.00 802.45 L1158.00 802.35 L1159.00 802.25 L1160.00 802.15 L1161.00 802.05 L1162.00 801.95 L1163.00 801.85 L1164.00 801.76 L1165.00 801.67 L1166.00 801.58 L1167.00 801.51 L1168.00 801.44 L1169.00 801.39 L1170.00 801.36 L1171.00 801.36 L1172.00 801.37 L1173.00 801.41 L1174.00 801.46 L1175.00 801.54 L1176.00 801.63 L1177.00 801.73 L1178.00 801.85 L1179.00 801.97 L1180.00 802.09 L1181.00 802.21 L1182.00 802.34 L1183.00 802.47 L1184.00 802.59 L1185.00 802.72 L1186.00 802.85 L1187.00 802.98 L1188.00 803.10 L1189.00 803.23 L1190.00 803.36 L1191.00 803.49 L1192.00 803.61 L1193.00 803.74 L1194.00 803.87 L1195.00 804.00 L1196.00 804.12 L1197.00 804.25 L1198.00 804.38 L1199.00 804.50 L1200.00 804.62 L1201.00 804.74 L1202.00 804.85 L1203.00 804.95 L1204.00 805.04 L1205.00 805.12 L1206.00 805.18 L1207.00 805.22 L1208.00 805.25 L1209.00 805.26 L1210.00 805.25 L1211.00 805.23 L1212.00 805.20 L1213.00 805.16 L1214.00 805.12 L1215.00 805.07 L1216.00 805.02 L1217.00 804.97 L1218.00 804.92 L1219.00 804.86 L1220.00 804.81 L1221.00 804.76 L1222.00 804.71 L1223.00 804.66 L1224.00 804.60 L1225.00 804.55 L1226.00 804.50 L1227.00 804.45 L1228.00 804.40 L1229.00 804.34 L1230.00 804.29 L1231.00 804.24 L1232.00 804.19 L1233.00 804.14 L1234.00 804.08 L1235.00 804.03 L1236.00 803.98 L1237.00 803.93 L1238.00 803.88 L1239.00 803.82 L1240.00 803.77 L1241.00 803.72 L1242.00 803.67 L1243.00 803.61 L1244.00 803.56 L1245.00 803.51 L1246.00 803.45 L1247.00 803.40 L1248.00 803.33 L1249.00 803.26 L1250.00 803.18 L1251.00 803.08 L1252.00 802.95 L1253.00 802.80 L1254.00 802.63 L1255.00 802.41 L1256.00 802.16 L1257.00 801.89 L1258.00 801.58 L1259.00 801.24 L1260.00 800.89 L1261.00 800.52 L1262.00 800.14 L1263.00 799.76 L1264.00 799.37 L1265.00 798.98 L1266.00 798.60 L1267.00 798.21 L1268.00 797.83 L1269.00 797.45 L1270.00 797.08 L1271.00 796.72 L1272.00 796.35 L1273.00 796.00 L1274.00 795.65 L1275.00 795.30 L1276.00 794.96 L1277.00 794.64 L1278.00 794.32 L1279.00 794.02 L1280.00 793.75 L1281.00 793.51 L1282.00 793.31 L1283.00 793.15 L1284.00 793.04 L1285.00 792.98 L1286.00 792.97 L1287.00 792.99 L1288.00 793.05 L1289.00 793.14 L1290.00 793.25 L1291.00 793.37 L1292.00 793.51 L1293.00 793.65 L1294.00 793.80 L1295.00 793.95 L1296.00 794.11 L1297.00 794.28 L1298.00 794.45 L1299.00 794.64 L1300.00 794.84 L1301.00 795.05 L1302.00 795.27 L1303.00 795.49 L1304.00 795.73 L1305.00 795.97 L1306.00 796.22 L1307.00 796.47 L1308.00 796.72 L1309.00 796.98 L1310.00 797.23 L1311.00 797.49 L1312.00 797.74 L1313.00 798.00 L1314.00 798.26 L1315.00 798.51 L1316.00 798.77 L1317.00 799.02 L1318.00 799.28 L1319.00 799.53 L1320.00 799.79 L1321.00 800.04 L1322.00 800.30" fill="none" stroke="#3e96cc" stroke-width="2" stroke-linejoin="round"/></svg>
<div class="abs" style="left:911px;top:880px;width:12px;height:2px;background:#3e96cc;border-radius:1px"></div>
<div class="abs axis" style="left:929px;top:874px">8 Sept 2024–8 Sept 2025</div>
<svg class="abs" style="left:1080px;top:879px" width="14" height="4"><circle cx="1.5" cy="2" r="1" fill="#9dbccc"/><circle cx="6" cy="2" r="1" fill="#9dbccc"/><circle cx="10.5" cy="2" r="1" fill="#9dbccc"/></svg>
<div class="abs axis" style="left:1098px;top:874px">8 Sept 2023–7 Sept 2024</div>

<div class="card" style="left:1359px;top:654.5px;width:535px;height:255px"></div>
<div class="abs t13" style="left:1375px;top:673px"><span class="dot">Total sales by product</span></div>
<div class="abs" style="left:1375px;top:701px;line-height:16px;font-size:11.55px;color:#616161;white-space:nowrap">MVE NEXT GENERATION SC 4/3 Vapor Shipper with Mushroom- 4/3V holds 120 - Three (3) Ye...</div>
<div class="abs" style="left:1375px;top:806px;line-height:16px;font-size:11.55px;letter-spacing:-0.06px;color:#616161;white-space:nowrap">MVE XC 20 Signature - BEST SELLING TANK IN THE WORLD - 660 Straws, HOLDS 20 weeks -...</div>
<div class="abs" style="left:1375px;top:719.3px;width:354.7px;height:32.7px;background:#38a8ea;border-radius:0 3px 3px 0"></div>
<div class="abs" style="left:1740.3px;top:727.7px;line-height:16px;font-size:12px;color:#616161;white-space:nowrap">$4,26,584.77<span class="pct green" style="margin-left:10px"><svg width="8" height="8" viewBox="0 0 8 8" style="display:inline-block;vertical-align:middle;margin-right:3px;position:relative;top:-1.5px"><path d="M1.4 6.6 L5 3" stroke="currentColor" stroke-width="1.7" stroke-linecap="round"/><path d="M2.4 1.2 H6.8 V5.6 Z" fill="currentColor" stroke="currentColor" stroke-width="0.6" stroke-linejoin="round"/></svg>14%</span></div>
<div class="abs" style="left:1375px;top:754.9px;width:309.8px;height:32.7px;background:#97c9e8;border-radius:0 3px 3px 0"></div>
<div class="abs" style="left:1695.4px;top:763.3px;line-height:16px;font-size:12px;color:#616161;white-space:nowrap">$3,73,230.47</div>
<div class="abs" style="left:1375px;top:824.4px;width:341.0px;height:32.7px;background:#38a8ea;border-radius:0 3px 3px 0"></div>
<div class="abs" style="left:1726.6px;top:832.8px;line-height:16px;font-size:12px;color:#616161;white-space:nowrap">$4,10,272.44<span class="pct" style="margin-left:10px;color:#4a4a4a"><svg width="8" height="8" viewBox="0 0 8 8" style="display:inline-block;vertical-align:middle;margin-right:3px;position:relative;top:-1px"><path d="M1.4 1.4 L5 5" stroke="currentColor" stroke-width="1.7" stroke-linecap="round"/><path d="M2.4 6.8 H6.8 V2.4 Z" fill="currentColor" stroke="currentColor" stroke-width="0.6" stroke-linejoin="round"/></svg>2%</span></div>
<div class="abs" style="left:1375px;top:859.7px;width:349.0px;height:32.7px;background:#97c9e8;border-radius:0 3px 3px 0"></div>
<div class="abs" style="left:1734.6px;top:868.1px;line-height:16px;font-size:12px;color:#616161;white-space:nowrap">$4,20,349.17</div>

<div class="card" style="left:256px;top:924.5px;width:535px;height:80px"></div>
<div class="abs t13" style="left:272px;top:942.5px">Sessions over time</div>
<div class="card" style="left:807px;top:924.5px;width:536px;height:80px"></div>
<div class="abs t13" style="left:823px;top:942.5px">Conversion rate over time</div>
<div class="card" style="left:1359px;top:924.5px;width:535px;height:80px"></div>
<div class="abs t13" style="left:1375px;top:942.5px">Conversion rate breakdown</div>

<svg class="abs" style="left:1910px;top:62px" width="9" height="7"><path d="M1 6 L4.5 1.5 L8 6 Z" fill="#a3a3a3"/></svg><div class="abs" style="left:1912px;top:71px;width:6px;height:243px;border-radius:3px;background:#bdbdbd"></div><svg class="abs" style="left:1910px;top:938px" width="9" height="7"><path d="M1 1 L4.5 5.5 L8 1 Z" fill="#a3a3a3"/></svg>
<div id="bottomline" class="abs"></div>
</body></html>
